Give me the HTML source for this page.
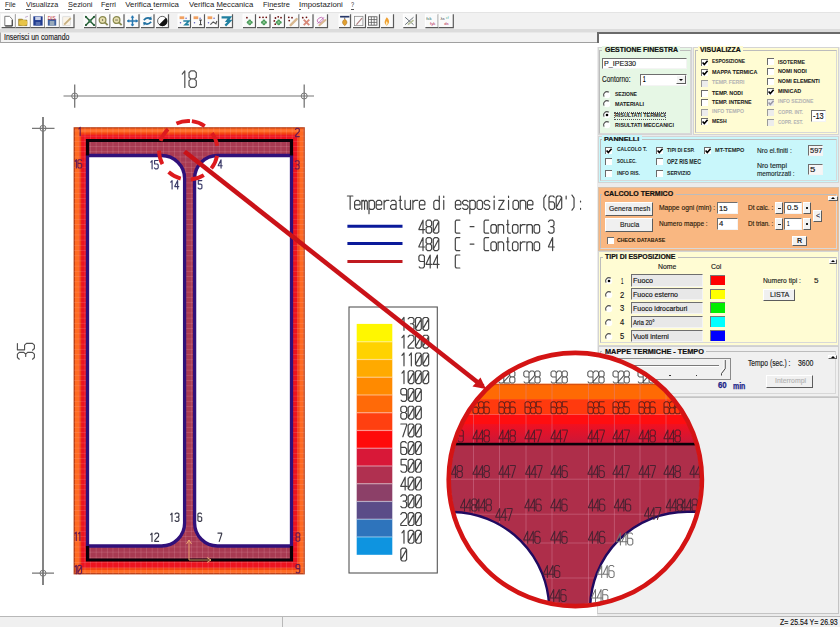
<!DOCTYPE html><html><head><meta charset="utf-8"><style>
*{box-sizing:border-box;margin:0;padding:0}
html,body{width:840px;height:627px;overflow:hidden;background:#fff;font-family:"Liberation Sans",sans-serif;}
.a{position:absolute}
.t{position:absolute;white-space:nowrap;line-height:1;-webkit-text-stroke:0.15px currentColor}
.menu{font-size:9px;color:#111}
.btn{position:absolute;background:#F4F4F4;border:1px solid #fff;border-right-color:#6a6a6a;border-bottom-color:#6a6a6a;box-shadow:1px 1px 0 #a0a0a0}
.inp{position:absolute;background:#fff;border:1px solid #f0f0f0;border-top-color:#777;border-left-color:#777;box-shadow:inset 1px 1px 0 #c8c8c8}
.grp{position:absolute;border:1px solid #c8c8c8;box-shadow:1px 1px 0 #fff inset}
.gt{position:absolute;font-weight:bold;font-size:7px;color:#111;padding:0 2px;line-height:1}
.cb{position:absolute;width:7px;height:7px;background:#fff;border:1px solid #fff;border-top-color:#777;border-left-color:#777}
.lb{position:absolute;font-size:5.2px;font-weight:bold;color:#222;white-space:nowrap;line-height:1;letter-spacing:-0.1px}
.dis{color:#b8b8b8}
.nl{position:absolute;font-size:8px;color:#111;white-space:nowrap;line-height:1}
</style></head><body>

<div class="a" style="left:0;top:0;width:840px;height:13px;background:#fff"></div>
<div class="t" style="left:5.40px;top:1.26px;font-size:7.85px;font-weight:normal;color:#222;transform:scaleX(0.839);transform-origin:0 0;-webkit-text-stroke:0">File</div>
<div class="t" style="left:25.70px;top:1.26px;font-size:7.85px;font-weight:normal;color:#222;transform:scaleX(0.914);transform-origin:0 0;-webkit-text-stroke:0">Visualizza</div>
<div class="t" style="left:67.50px;top:1.26px;font-size:7.85px;font-weight:normal;color:#222;transform:scaleX(0.952);transform-origin:0 0;-webkit-text-stroke:0">Sezioni</div>
<div class="t" style="left:100.70px;top:1.26px;font-size:7.85px;font-weight:normal;color:#222;transform:scaleX(0.930);transform-origin:0 0;-webkit-text-stroke:0">Ferri</div>
<div class="t" style="left:125.30px;top:1.26px;font-size:7.85px;font-weight:normal;color:#222;transform:scaleX(1.000);transform-origin:0 0;-webkit-text-stroke:0">Verifica termica</div>
<div class="t" style="left:188.60px;top:1.26px;font-size:7.85px;font-weight:normal;color:#222;transform:scaleX(0.982);transform-origin:0 0;-webkit-text-stroke:0">Verifica Meccanica</div>
<div class="t" style="left:262.50px;top:1.26px;font-size:7.85px;font-weight:normal;color:#222;transform:scaleX(0.946);transform-origin:0 0;-webkit-text-stroke:0">Finestre</div>
<div class="t" style="left:298.90px;top:1.26px;font-size:7.85px;font-weight:normal;color:#222;transform:scaleX(0.996);transform-origin:0 0;-webkit-text-stroke:0">Impostazioni</div>
<div class="t" style="left:351.40px;top:1.26px;font-size:7.85px;font-weight:normal;color:#222;transform:scaleX(0.712);transform-origin:0 0;-webkit-text-stroke:0">?</div>
<div class="a" style="left:5.2px;top:8.8px;width:4.8px;height:0.8px;background:#555"></div>
<div class="a" style="left:25.7px;top:8.8px;width:5.800000000000001px;height:0.8px;background:#555"></div>
<div class="a" style="left:67.5px;top:8.8px;width:4.5px;height:0.8px;background:#555"></div>
<div class="a" style="left:105px;top:8.8px;width:4px;height:0.8px;background:#555"></div>
<div class="a" style="left:150.3px;top:8.8px;width:3.0px;height:0.8px;background:#555"></div>
<div class="a" style="left:216.4px;top:8.8px;width:6.5px;height:0.8px;background:#555"></div>
<div class="a" style="left:268.9px;top:8.8px;width:5.100000000000023px;height:0.8px;background:#555"></div>
<div class="a" style="left:298.9px;top:8.8px;width:2.1000000000000227px;height:0.8px;background:#555"></div>
<div class="a" style="left:351.4px;top:8.8px;width:2.8000000000000114px;height:0.8px;background:#555"></div>
<div class="a" style="left:0;top:12px;width:840px;height:1px;background:#e4e4e4"></div>
<div class="a" style="left:0;top:13px;width:840px;height:16px;background:#f1f1f1"></div>
<div class="a" style="left:0;top:29px;width:840px;height:3px;background:#dcdcdc"></div>
<div class="a" style="left:0;top:32px;width:840px;height:11px;background:#f2f2f2;border-bottom:1px solid #a0a0a0;border-left:1px solid #a8a8a8;border-top:1px solid #e8e8e8"></div>
<div class="t" style="left:4.20px;top:32.86px;font-size:8.43px;font-weight:normal;color:#1a1a1a;transform:scaleX(0.821);transform-origin:0 0;">Inserisci un comando</div>
<div class="a" style="left:597px;top:32px;width:243px;height:11px;background:#fff;border-top:2px solid #6a6a6a;border-left:2px solid #6a6a6a"></div>
<div class="a" style="left:0;top:616px;width:840px;height:11px;background:#f0f0f0;border-top:1px solid #b8b8b8"></div>
<div class="a" style="left:282px;top:617px;width:1px;height:10px;background:#b8b8b8"></div>
<div class="t" style="left:779.50px;top:617.87px;font-size:9.01px;font-weight:normal;color:#111;transform:scaleX(0.776);transform-origin:0 0;">Z= 25.54 Y= 26.93</div>
<div class="a" style="left:597px;top:43px;width:243px;height:573px;background:#EBEBEB"></div>
<div class="a" style="left:597px;top:43px;width:243px;height:3.5px;background:#fff"></div>
<div class="a" style="left:597.5px;top:46.5px;width:94.5px;height:88.5px;background:#E6F7E5;border:1px solid #D4D4D4"></div>
<div class="a" style="left:692.5px;top:46.5px;width:146.0px;height:88.5px;background:#FFFCD3;border:1px solid #D4D4D4"></div>
<div class="a" style="left:597.5px;top:135.5px;width:241.0px;height:47.5px;background:#C9F7FB;border:1px solid #D4D4D4"></div>
<div class="a" style="left:597.5px;top:187px;width:241.0px;height:63.5px;background:#F9B781;border:1px solid #D8C0A8"></div>
<div class="a" style="left:597.5px;top:251px;width:241.0px;height:94.5px;background:#FFFCD3;border:1px solid #D4D4D4"></div>
<div class="a" style="left:597.5px;top:346px;width:241.0px;height:51px;background:#F0F0F0;border:1px solid #D0D0D0"></div>
<div class="a" style="left:597px;top:398px;width:241px;height:216px;background:#F0F0F0"></div>
<div class="a" style="left:599px;top:50.3px;width:91.5px;height:84.00000000000001px;border:1px solid #bcbcbc;border-right-color:#d8d8d8;border-bottom-color:#d8d8d8"></div>
<div class="a" style="left:694.5px;top:50.3px;width:142.79999999999995px;height:82.7px;border:1px solid #bcbcbc;border-right-color:#d8d8d8;border-bottom-color:#d8d8d8"></div>
<div class="a" style="left:600px;top:139.2px;width:236.70000000000005px;height:42.30000000000001px;border:1px solid #bcbcbc;border-right-color:#d8d8d8;border-bottom-color:#d8d8d8"></div>
<div class="a" style="left:600px;top:193.8px;width:237px;height:55.39999999999998px;border:1px solid #bcbcbc;border-right-color:#d8d8d8;border-bottom-color:#d8d8d8"></div>
<div class="a" style="left:600px;top:256.7px;width:237px;height:86.80000000000001px;border:1px solid #bcbcbc;border-right-color:#d8d8d8;border-bottom-color:#d8d8d8"></div>
<div class="a" style="left:600px;top:351.1px;width:236px;height:43.299999999999955px;border:1px solid #bcbcbc;border-right-color:#d8d8d8;border-bottom-color:#d8d8d8"></div>
<div class="a" style="left:597px;top:396.8px;width:241.5px;height:217px;border:1px solid #c4c4c4;border-left-color:#d0d0d0"></div>
<div class="a" style="left:602.0px;top:46px;width:78.20000000000005px;height:8.5px;background:#E6F7E5"></div>
<div class="t" style="left:604.50px;top:46.96px;font-size:6.54px;font-weight:bold;color:#101010;transform:scaleX(1.071);transform-origin:0 0;-webkit-text-stroke:0.2px currentColor;">GESTIONE FINESTRA</div>
<div class="a" style="left:697.7px;top:46.3px;width:45.799999999999955px;height:8.450000000000003px;background:#FFFCD3"></div>
<div class="t" style="left:700.20px;top:47.27px;font-size:6.47px;font-weight:bold;color:#101010;transform:scaleX(1.071);transform-origin:0 0;-webkit-text-stroke:0.2px currentColor;">VISUALIZZA</div>
<div class="a" style="left:601.7px;top:135.3px;width:40.19999999999993px;height:8.299999999999983px;background:#C9F7FB"></div>
<div class="t" style="left:604.20px;top:136.31px;font-size:6.25px;font-weight:bold;color:#101010;transform:scaleX(1.144);transform-origin:0 0;-webkit-text-stroke:0.2px currentColor;">PANNELLI</div>
<div class="a" style="left:601.9px;top:189.9px;width:74.20000000000005px;height:8.599999999999994px;background:#F9B781"></div>
<div class="t" style="left:604.40px;top:190.84px;font-size:6.69px;font-weight:bold;color:#101010;transform:scaleX(1.052);transform-origin:0 0;-webkit-text-stroke:0.2px currentColor;">CALCOLO TERMICO</div>
<div class="a" style="left:602.6px;top:252.8px;width:75.5px;height:8.699999999999989px;background:#FFFCD3"></div>
<div class="t" style="left:605.10px;top:253.72px;font-size:6.83px;font-weight:bold;color:#101010;transform:scaleX(1.015);transform-origin:0 0;-webkit-text-stroke:0.2px currentColor;">TIPI DI ESPOSIZIONE</div>
<div class="a" style="left:602.2px;top:347.6px;width:104.0px;height:8.799999999999955px;background:#F0F0F0"></div>
<div class="t" style="left:604.70px;top:348.49px;font-size:6.98px;font-weight:bold;color:#101010;transform:scaleX(1.051);transform-origin:0 0;-webkit-text-stroke:0.2px currentColor;">MAPPE TERMICHE - TEMPO</div>
<div class="a" style="left:602.1px;top:57.5px;width:84.60000000000002px;height:11.299999999999997px;background:#fff;border-top:1.5px solid #6e6e6e;border-left:1.5px solid #6e6e6e;border-right:1px solid #f4f4f4;border-bottom:1px solid #f4f4f4"></div>
<div class="t" style="left:603.90px;top:59.76px;font-size:7.85px;font-weight:normal;color:#1a1a1a;transform:scaleX(0.908);transform-origin:0 0;">P_IPE330</div>
<div class="t" style="left:602.10px;top:76.39px;font-size:8.28px;font-weight:normal;color:#1a1a1a;transform:scaleX(0.786);transform-origin:0 0;">Contorno:</div>
<div class="a" style="left:640.2px;top:73.5px;width:46.5px;height:12.0px;background:#fff;border-top:1.5px solid #6e6e6e;border-left:1.5px solid #6e6e6e;border-right:1px solid #f4f4f4;border-bottom:1px solid #f4f4f4"></div>
<div class="t" style="left:642.90px;top:75.79px;font-size:8.28px;font-weight:bold;color:#111;transform:scaleX(0.544);transform-origin:0 0;-webkit-text-stroke:0.05px currentColor;">1</div>
<div class="a" style="left:676px;top:74.8px;width:10px;height:9.700000000000003px;background:#F4F4F4;border-top:1px solid #fff;border-left:1px solid #fff;border-right:1.6px solid #5c5c5c;border-bottom:1.6px solid #5c5c5c"></div>
<div class="a" style="left:678.7px;top:78.8px;width:0;height:0;border-left:2.6px solid transparent;border-right:2.6px solid transparent;border-top:2.8px solid #000"></div>
<svg class="a" style="left:603.1px;top:91px" width="8" height="8" viewBox="0 0 8 8"><circle cx="4" cy="4" r="3.3" fill="#fff"/><path d="M1.2 5.6 A3.2 3.2 0 0 1 5.8 1.3" stroke="#555" stroke-width="1.1" fill="none"/></svg>
<div class="t" style="left:614.60px;top:92.48px;font-size:5.81px;font-weight:bold;color:#222;transform:scaleX(0.862);transform-origin:0 0;-webkit-text-stroke:0.05px currentColor;">SEZIONE</div>
<svg class="a" style="left:603.1px;top:100.1px" width="8" height="8" viewBox="0 0 8 8"><circle cx="4" cy="4" r="3.3" fill="#fff"/><path d="M1.2 5.6 A3.2 3.2 0 0 1 5.8 1.3" stroke="#555" stroke-width="1.1" fill="none"/></svg>
<div class="t" style="left:614.60px;top:102.06px;font-size:5.96px;font-weight:bold;color:#222;transform:scaleX(0.906);transform-origin:0 0;-webkit-text-stroke:0.05px currentColor;">MATERIALI</div>
<svg class="a" style="left:603.1px;top:111.3px" width="8" height="8" viewBox="0 0 8 8"><circle cx="4" cy="4" r="3.3" fill="#fff"/><path d="M1.2 5.6 A3.2 3.2 0 0 1 5.8 1.3" stroke="#555" stroke-width="1.1" fill="none"/><circle cx="4" cy="4" r="1.3" fill="#000"/></svg>
<div class="t" style="left:614.60px;top:112.76px;font-size:5.96px;font-weight:bold;color:#222;transform:scaleX(0.901);transform-origin:0 0;-webkit-text-stroke:0.05px currentColor;">RISULTATI TERMICI</div>
<svg class="a" style="left:603.1px;top:121px" width="8" height="8" viewBox="0 0 8 8"><circle cx="4" cy="4" r="3.3" fill="#fff"/><path d="M1.2 5.6 A3.2 3.2 0 0 1 5.8 1.3" stroke="#555" stroke-width="1.1" fill="none"/></svg>
<div class="t" style="left:614.60px;top:122.41px;font-size:6.25px;font-weight:bold;color:#222;transform:scaleX(0.862);transform-origin:0 0;-webkit-text-stroke:0.05px currentColor;">RISULTATI MECCANICI</div>
<div class="a" style="left:613.9px;top:111.6px;width:51.8px;height:8px;border:1px dotted #555"></div>
<div class="a" style="left:700.5px;top:58.7px;width:7px;height:7px;background:#fff;border-top:1.5px solid #6a6a6a;border-left:1.5px solid #6a6a6a"></div>
<svg class="a" style="left:700.5px;top:58.7px" width="8" height="8" viewBox="0 0 8 8"><path d="M1.6 3.6 L3.3 5.6 L6.6 1.8" fill="none" stroke="#000" stroke-width="1.6"/></svg>
<div class="t" style="left:712.00px;top:59.29px;font-size:5.09px;font-weight:bold;color:#1a1a1a;transform:scaleX(0.957);transform-origin:0 0;-webkit-text-stroke:0.05px currentColor;">ESPOSIZIONE</div>
<div class="a" style="left:700.5px;top:69.4px;width:7px;height:7px;background:#fff;border-top:1.5px solid #6a6a6a;border-left:1.5px solid #6a6a6a"></div>
<svg class="a" style="left:700.5px;top:69.4px" width="8" height="8" viewBox="0 0 8 8"><path d="M1.6 3.6 L3.3 5.6 L6.6 1.8" fill="none" stroke="#000" stroke-width="1.6"/></svg>
<div class="t" style="left:712.00px;top:69.88px;font-size:5.81px;font-weight:bold;color:#1a1a1a;transform:scaleX(0.939);transform-origin:0 0;-webkit-text-stroke:0.05px currentColor;">MAPPA TERMICA</div>
<div class="a" style="left:700.5px;top:80.2px;width:7px;height:7px;background:#ECECEC;border-top:1.5px solid #9a9a9a;border-left:1.5px solid #9a9a9a"></div>
<div class="t" style="left:712.00px;top:80.06px;font-size:5.96px;font-weight:bold;color:#b4b4b4;transform:scaleX(0.882);transform-origin:0 0;-webkit-text-stroke:0.05px currentColor;">TEMP. FERRI</div>
<div class="a" style="left:700.5px;top:89.8px;width:7px;height:7px;background:#fff;border-top:1.5px solid #6a6a6a;border-left:1.5px solid #6a6a6a"></div>
<div class="t" style="left:712.00px;top:90.77px;font-size:5.23px;font-weight:bold;color:#1a1a1a;transform:scaleX(1.032);transform-origin:0 0;-webkit-text-stroke:0.05px currentColor;">TEMP. NODI</div>
<div class="a" style="left:700.5px;top:99.2px;width:7px;height:7px;background:#fff;border-top:1.5px solid #6a6a6a;border-left:1.5px solid #6a6a6a"></div>
<div class="t" style="left:712.00px;top:100.08px;font-size:5.81px;font-weight:bold;color:#1a1a1a;transform:scaleX(0.899);transform-origin:0 0;-webkit-text-stroke:0.05px currentColor;">TEMP. INTERNE</div>
<div class="a" style="left:700.5px;top:109px;width:7px;height:7px;background:#ECECEC;border-top:1.5px solid #9a9a9a;border-left:1.5px solid #9a9a9a"></div>
<div class="t" style="left:712.00px;top:109.47px;font-size:5.23px;font-weight:bold;color:#b4b4b4;transform:scaleX(0.986);transform-origin:0 0;-webkit-text-stroke:0.05px currentColor;">INFO TEMPO</div>
<div class="a" style="left:700.5px;top:118.4px;width:7px;height:7px;background:#fff;border-top:1.5px solid #6a6a6a;border-left:1.5px solid #6a6a6a"></div>
<svg class="a" style="left:700.5px;top:118.4px" width="8" height="8" viewBox="0 0 8 8"><path d="M1.6 3.6 L3.3 5.6 L6.6 1.8" fill="none" stroke="#000" stroke-width="1.6"/></svg>
<div class="t" style="left:712.00px;top:118.78px;font-size:5.81px;font-weight:bold;color:#1a1a1a;transform:scaleX(0.875);transform-origin:0 0;-webkit-text-stroke:0.05px currentColor;">MESH</div>
<div class="a" style="left:767.1px;top:58.4px;width:7px;height:7px;background:#fff;border-top:1.5px solid #6a6a6a;border-left:1.5px solid #6a6a6a"></div>
<div class="t" style="left:778.20px;top:58.73px;font-size:6.10px;font-weight:bold;color:#1a1a1a;transform:scaleX(0.846);transform-origin:0 0;-webkit-text-stroke:0.05px currentColor;">ISOTERME</div>
<div class="a" style="left:767.1px;top:68.1px;width:7px;height:7px;background:#fff;border-top:1.5px solid #6a6a6a;border-left:1.5px solid #6a6a6a"></div>
<div class="t" style="left:778.20px;top:69.15px;font-size:5.38px;font-weight:bold;color:#1a1a1a;transform:scaleX(0.994);transform-origin:0 0;-webkit-text-stroke:0.05px currentColor;">NOMI NODI</div>
<div class="a" style="left:767.1px;top:78.3px;width:7px;height:7px;background:#fff;border-top:1.5px solid #6a6a6a;border-left:1.5px solid #6a6a6a"></div>
<div class="t" style="left:778.20px;top:79.35px;font-size:5.38px;font-weight:bold;color:#1a1a1a;transform:scaleX(0.978);transform-origin:0 0;-webkit-text-stroke:0.05px currentColor;">NOMI ELEMENTI</div>
<div class="a" style="left:767.1px;top:88.1px;width:7px;height:7px;background:#fff;border-top:1.5px solid #6a6a6a;border-left:1.5px solid #6a6a6a"></div>
<svg class="a" style="left:767.1px;top:88.1px" width="8" height="8" viewBox="0 0 8 8"><path d="M1.6 3.6 L3.3 5.6 L6.6 1.8" fill="none" stroke="#000" stroke-width="1.6"/></svg>
<div class="t" style="left:778.20px;top:89.17px;font-size:5.23px;font-weight:bold;color:#1a1a1a;transform:scaleX(1.042);transform-origin:0 0;-webkit-text-stroke:0.05px currentColor;">MINICAD</div>
<div class="a" style="left:767.1px;top:98.5px;width:7px;height:7px;background:#ECECEC;border-top:1.5px solid #9a9a9a;border-left:1.5px solid #9a9a9a"></div>
<svg class="a" style="left:767.1px;top:98.5px" width="8" height="8" viewBox="0 0 8 8"><path d="M1.6 3.6 L3.3 5.6 L6.6 1.8" fill="none" stroke="#9a9aa8" stroke-width="1.6"/></svg>
<div class="t" style="left:778.20px;top:99.05px;font-size:5.38px;font-weight:bold;color:#b4b4b4;transform:scaleX(0.930);transform-origin:0 0;-webkit-text-stroke:0.05px currentColor;">INFO SEZIONE</div>
<div class="a" style="left:767.1px;top:108.7px;width:7px;height:7px;background:#ECECEC;border-top:1.5px solid #9a9a9a;border-left:1.5px solid #9a9a9a"></div>
<div class="t" style="left:778.20px;top:109.75px;font-size:5.38px;font-weight:bold;color:#b4b4b4;transform:scaleX(0.893);transform-origin:0 0;-webkit-text-stroke:0.05px currentColor;">COPR. INT.</div>
<div class="a" style="left:767.1px;top:118.9px;width:7px;height:7px;background:#ECECEC;border-top:1.5px solid #9a9a9a;border-left:1.5px solid #9a9a9a"></div>
<div class="t" style="left:778.20px;top:119.95px;font-size:5.38px;font-weight:bold;color:#b4b4b4;transform:scaleX(0.840);transform-origin:0 0;-webkit-text-stroke:0.05px currentColor;">COPR. EST.</div>
<div class="a" style="left:810.7px;top:110.1px;width:15.299999999999955px;height:12.100000000000009px;background:#fff;border-top:1.5px solid #6e6e6e;border-left:1.5px solid #6e6e6e;border-right:1px solid #f4f4f4;border-bottom:1px solid #f4f4f4"></div>
<div class="t" style="left:812.60px;top:111.52px;font-size:8.72px;font-weight:normal;color:#111;transform:scaleX(0.849);transform-origin:0 0;">-13</div>
<div class="a" style="left:605.4px;top:146.9px;width:7px;height:7px;background:#fff;border-top:1.5px solid #6a6a6a;border-left:1.5px solid #6a6a6a"></div>
<svg class="a" style="left:605.4px;top:146.9px" width="8" height="8" viewBox="0 0 8 8"><path d="M1.6 3.6 L3.3 5.6 L6.6 1.8" fill="none" stroke="#000" stroke-width="1.6"/></svg>
<div class="t" style="left:617.00px;top:147.38px;font-size:5.81px;font-weight:bold;color:#1e2a2a;transform:scaleX(0.860);transform-origin:0 0;-webkit-text-stroke:0.05px currentColor;">CALCOLO T.</div>
<div class="a" style="left:605.4px;top:158.3px;width:7px;height:7px;background:#fff;border-top:1.5px solid #6a6a6a;border-left:1.5px solid #6a6a6a"></div>
<div class="t" style="left:617.00px;top:159.26px;font-size:5.96px;font-weight:bold;color:#1e2a2a;transform:scaleX(0.759);transform-origin:0 0;-webkit-text-stroke:0.05px currentColor;">SOLLEC.</div>
<div class="a" style="left:605.4px;top:170.2px;width:7px;height:7px;background:#fff;border-top:1.5px solid #6a6a6a;border-left:1.5px solid #6a6a6a"></div>
<div class="t" style="left:617.00px;top:171.22px;font-size:5.52px;font-weight:bold;color:#1e2a2a;transform:scaleX(0.899);transform-origin:0 0;-webkit-text-stroke:0.05px currentColor;">INFO RIS.</div>
<div class="a" style="left:655.9px;top:146.9px;width:7px;height:7px;background:#fff;border-top:1.5px solid #6a6a6a;border-left:1.5px solid #6a6a6a"></div>
<svg class="a" style="left:655.9px;top:146.9px" width="8" height="8" viewBox="0 0 8 8"><path d="M1.6 3.6 L3.3 5.6 L6.6 1.8" fill="none" stroke="#000" stroke-width="1.6"/></svg>
<div class="t" style="left:667.00px;top:147.11px;font-size:6.25px;font-weight:bold;color:#1e2a2a;transform:scaleX(0.794);transform-origin:0 0;-webkit-text-stroke:0.05px currentColor;">TIPI DI ESP.</div>
<div class="a" style="left:655.9px;top:158.3px;width:7px;height:7px;background:#fff;border-top:1.5px solid #6a6a6a;border-left:1.5px solid #6a6a6a"></div>
<div class="t" style="left:667.00px;top:158.54px;font-size:6.69px;font-weight:bold;color:#1e2a2a;transform:scaleX(0.782);transform-origin:0 0;-webkit-text-stroke:0.05px currentColor;">OPZ RIS MEC</div>
<div class="a" style="left:655.9px;top:170.2px;width:7px;height:7px;background:#fff;border-top:1.5px solid #6a6a6a;border-left:1.5px solid #6a6a6a"></div>
<div class="t" style="left:667.00px;top:170.86px;font-size:5.96px;font-weight:bold;color:#1e2a2a;transform:scaleX(0.859);transform-origin:0 0;-webkit-text-stroke:0.05px currentColor;">SERVIZIO</div>
<div class="a" style="left:703.9px;top:146.9px;width:7px;height:7px;background:#fff;border-top:1.5px solid #6a6a6a;border-left:1.5px solid #6a6a6a"></div>
<svg class="a" style="left:703.9px;top:146.9px" width="8" height="8" viewBox="0 0 8 8"><path d="M1.6 3.6 L3.3 5.6 L6.6 1.8" fill="none" stroke="#000" stroke-width="1.6"/></svg>
<div class="t" style="left:714.80px;top:147.11px;font-size:6.25px;font-weight:bold;color:#1e2a2a;transform:scaleX(0.891);transform-origin:0 0;-webkit-text-stroke:0.05px currentColor;">MT-TEMPO</div>
<div class="t" style="left:757.10px;top:146.90px;font-size:7.56px;font-weight:normal;color:#1a2a2a;transform:scaleX(0.872);transform-origin:0 0;">Nro el.finiti :</div>
<div class="t" style="left:757.10px;top:162.19px;font-size:6.98px;font-weight:normal;color:#1a2a2a;transform:scaleX(0.992);transform-origin:0 0;">Nro tempi</div>
<div class="t" style="left:757.10px;top:170.18px;font-size:7.70px;font-weight:normal;color:#1a2a2a;transform:scaleX(0.823);transform-origin:0 0;">memorizzati :</div>
<div class="a" style="left:808.1px;top:145.2px;width:15.199999999999932px;height:10.5px;background:#F6F6F6;border-top:1.5px solid #6e6e6e;border-left:1.5px solid #6e6e6e;border-right:1px solid #f4f4f4;border-bottom:1px solid #f4f4f4"></div>
<div class="t" style="left:809.50px;top:147.52px;font-size:6.83px;font-weight:normal;color:#222;transform:scaleX(1.087);transform-origin:0 0;">597</div>
<div class="a" style="left:808.1px;top:163.8px;width:15.199999999999932px;height:11.0px;background:#F6F6F6;border-top:1.5px solid #6e6e6e;border-left:1.5px solid #6e6e6e;border-right:1px solid #f4f4f4;border-bottom:1px solid #f4f4f4"></div>
<div class="t" style="left:809.50px;top:165.88px;font-size:7.70px;font-weight:normal;color:#222;transform:scaleX(1.240);transform-origin:0 0;">5</div>
<div class="a" style="left:605px;top:202.1px;width:48.200000000000045px;height:14.400000000000006px;background:#F0F0F0;border-top:1px solid #fff;border-left:1px solid #fff;border-right:1.6px solid #5c5c5c;border-bottom:1.6px solid #5c5c5c"></div>
<div class="t" style="left:608.70px;top:205.18px;font-size:7.70px;font-weight:normal;color:#1a1a1a;transform:scaleX(0.885);transform-origin:0 0;">Genera mesh</div>
<div class="a" style="left:605px;top:217.6px;width:48.200000000000045px;height:14.5px;background:#F0F0F0;border-top:1px solid #fff;border-left:1px solid #fff;border-right:1.6px solid #5c5c5c;border-bottom:1.6px solid #5c5c5c"></div>
<div class="t" style="left:620.00px;top:220.66px;font-size:7.85px;font-weight:normal;color:#1a1a1a;transform:scaleX(0.866);transform-origin:0 0;">Brucia</div>
<div class="a" style="left:606.6px;top:237.4px;width:7px;height:7px;background:#fff;border-top:1.5px solid #6a6a6a;border-left:1.5px solid #6a6a6a"></div>
<div class="t" style="left:617.30px;top:238.12px;font-size:5.52px;font-weight:bold;color:#2a1a0a;transform:scaleX(0.944);transform-origin:0 0;-webkit-text-stroke:0.05px currentColor;">CHECK DATABASE</div>
<div class="t" style="left:658.80px;top:204.26px;font-size:7.85px;font-weight:normal;color:#2a1a0a;transform:scaleX(0.859);transform-origin:0 0;">Mappe ogni (min) :</div>
<div class="t" style="left:658.80px;top:219.76px;font-size:7.85px;font-weight:normal;color:#2a1a0a;transform:scaleX(0.833);transform-origin:0 0;">Numero mappe :</div>
<div class="a" style="left:717.2px;top:202.3px;width:20.799999999999955px;height:11.699999999999989px;background:#fff;border-top:1.5px solid #6e6e6e;border-left:1.5px solid #6e6e6e;border-right:1px solid #f4f4f4;border-bottom:1px solid #f4f4f4"></div>
<div class="t" style="left:719.30px;top:204.76px;font-size:7.85px;font-weight:normal;color:#111;transform:scaleX(0.987);transform-origin:0 0;">15</div>
<div class="a" style="left:717.2px;top:218.4px;width:20.799999999999955px;height:11.799999999999983px;background:#fff;border-top:1.5px solid #6e6e6e;border-left:1.5px solid #6e6e6e;border-right:1px solid #f4f4f4;border-bottom:1px solid #f4f4f4"></div>
<div class="t" style="left:719.30px;top:220.38px;font-size:7.70px;font-weight:normal;color:#111;transform:scaleX(1.006);transform-origin:0 0;">4</div>
<div class="t" style="left:747.50px;top:204.43px;font-size:7.41px;font-weight:normal;color:#2a1a0a;transform:scaleX(0.877);transform-origin:0 0;">Dt calc. :</div>
<div class="t" style="left:747.50px;top:220.15px;font-size:7.27px;font-weight:normal;color:#2a1a0a;transform:scaleX(0.859);transform-origin:0 0;">Dt trian. :</div>
<div class="a" style="left:774.9px;top:202px;width:8.100000000000023px;height:11.699999999999989px;background:#F2F2F2;border-top:1px solid #fff;border-left:1px solid #fff;border-right:1.6px solid #5c5c5c;border-bottom:1.6px solid #5c5c5c"></div>
<div class="a" style="left:777.5px;top:208px;width:3px;height:1px;background:#222"></div>
<div class="a" style="left:783.5px;top:202px;width:18.700000000000045px;height:11.699999999999989px;background:#fff;border-top:1.5px solid #6e6e6e;border-left:1.5px solid #6e6e6e;border-right:1px solid #f4f4f4;border-bottom:1px solid #f4f4f4"></div>
<div class="t" style="left:786.50px;top:204.43px;font-size:7.41px;font-weight:normal;color:#111;transform:scaleX(1.077);transform-origin:0 0;">0.5</div>
<div class="a" style="left:802.7px;top:202px;width:8.099999999999909px;height:11.699999999999989px;background:#F2F2F2;border-top:1px solid #fff;border-left:1px solid #fff;border-right:1.6px solid #5c5c5c;border-bottom:1.6px solid #5c5c5c"></div>
<div class="a" style="left:805.8px;top:206.85px;width:2px;height:2px;background:#222"></div>
<div class="a" style="left:774.9px;top:218.2px;width:8.100000000000023px;height:11.700000000000017px;background:#F2F2F2;border-top:1px solid #fff;border-left:1px solid #fff;border-right:1.6px solid #5c5c5c;border-bottom:1.6px solid #5c5c5c"></div>
<div class="a" style="left:777.5px;top:224px;width:3px;height:1px;background:#222"></div>
<div class="a" style="left:783.5px;top:218.2px;width:18.700000000000045px;height:11.700000000000017px;background:#fff;border-top:1.5px solid #6e6e6e;border-left:1.5px solid #6e6e6e;border-right:1px solid #f4f4f4;border-bottom:1px solid #f4f4f4"></div>
<div class="t" style="left:786.50px;top:220.15px;font-size:7.27px;font-weight:normal;color:#111;transform:scaleX(0.620);transform-origin:0 0;">1</div>
<div class="a" style="left:802.7px;top:218.2px;width:8.099999999999909px;height:11.700000000000017px;background:#F2F2F2;border-top:1px solid #fff;border-left:1px solid #fff;border-right:1.6px solid #5c5c5c;border-bottom:1.6px solid #5c5c5c"></div>
<div class="a" style="left:805.8px;top:223.05px;width:2px;height:2px;background:#222"></div>
<div class="a" style="left:812.8px;top:209.6px;width:9.600000000000023px;height:12.200000000000017px;background:#F2F2F2;border-top:1px solid #fff;border-left:1px solid #fff;border-right:1.6px solid #5c5c5c;border-bottom:1.6px solid #5c5c5c"></div>
<div class="t" style="left:815.50px;top:212.15px;font-size:7.27px;font-weight:normal;color:#223;transform:scaleX(0.941);transform-origin:0 0;">&lt;</div>
<div class="a" style="left:792px;top:236px;width:14.700000000000045px;height:9.599999999999994px;background:#F2F2F2;border-top:1px solid #fff;border-left:1px solid #fff;border-right:1.6px solid #5c5c5c;border-bottom:1.6px solid #5c5c5c"></div>
<div class="t" style="left:797.10px;top:237.35px;font-size:7.27px;font-weight:bold;color:#222;transform:scaleX(0.975);transform-origin:0 0;-webkit-text-stroke:0.05px currentColor;">R</div>
<div class="a" style="left:828px;top:195.6px;width:9.5px;height:5.200000000000017px;background:#F2F2F2;border-top:1px solid #fff;border-left:1px solid #fff;border-right:1.6px solid #5c5c5c;border-bottom:1.6px solid #5c5c5c"></div>
<div class="a" style="left:831px;top:196.8px;width:0;height:0;border-left:2px solid transparent;border-right:2px solid transparent;border-bottom:2px solid #000"></div>
<div class="t" style="left:658.00px;top:263.10px;font-size:7.56px;font-weight:normal;color:#1a1a1a;transform:scaleX(0.907);transform-origin:0 0;">Nome</div>
<div class="t" style="left:711.40px;top:263.10px;font-size:7.56px;font-weight:normal;color:#1a1a1a;transform:scaleX(0.917);transform-origin:0 0;">Col</div>
<svg class="a" style="left:604.5px;top:277.4px" width="8" height="8" viewBox="0 0 8 8"><circle cx="4" cy="4" r="3.3" fill="#fff"/><path d="M1.2 5.6 A3.2 3.2 0 0 1 5.8 1.3" stroke="#555" stroke-width="1.1" fill="none"/><circle cx="4" cy="4" r="1.3" fill="#000"/></svg>
<div class="t" style="left:621.20px;top:276.89px;font-size:8.87px;font-weight:normal;color:#111;transform:scaleX(0.488);transform-origin:0 0;">1</div>
<div class="a" style="left:630.9px;top:274.3px;width:72.10000000000002px;height:12.400000000000034px;background:#E8E8E8;border-top:1.5px solid #6e6e6e;border-left:1.5px solid #6e6e6e;border-right:1px solid #f4f4f4;border-bottom:1px solid #f4f4f4"></div>
<div class="t" style="left:632.80px;top:277.40px;font-size:7.56px;font-weight:normal;color:#111;transform:scaleX(0.952);transform-origin:0 0;">Fuoco</div>
<div class="a" style="left:710px;top:274.8px;width:14.8px;height:10.6px;background:#FF0000;border-top:1px solid #777;border-left:1px solid #777"></div>
<svg class="a" style="left:604.5px;top:291.2px" width="8" height="8" viewBox="0 0 8 8"><circle cx="4" cy="4" r="3.3" fill="#fff"/><path d="M1.2 5.6 A3.2 3.2 0 0 1 5.8 1.3" stroke="#555" stroke-width="1.1" fill="none"/></svg>
<div class="t" style="left:620.30px;top:290.69px;font-size:8.87px;font-weight:normal;color:#111;transform:scaleX(0.854);transform-origin:0 0;">2</div>
<div class="a" style="left:630.9px;top:288.1px;width:72.10000000000002px;height:12.400000000000034px;background:#E8E8E8;border-top:1.5px solid #6e6e6e;border-left:1.5px solid #6e6e6e;border-right:1px solid #f4f4f4;border-bottom:1px solid #f4f4f4"></div>
<div class="t" style="left:632.80px;top:291.20px;font-size:7.56px;font-weight:normal;color:#111;transform:scaleX(0.933);transform-origin:0 0;">Fuoco esterno</div>
<div class="a" style="left:710px;top:288.6px;width:14.8px;height:10.6px;background:#FFFF00;border-top:1px solid #777;border-left:1px solid #777"></div>
<svg class="a" style="left:604.5px;top:305.0px" width="8" height="8" viewBox="0 0 8 8"><circle cx="4" cy="4" r="3.3" fill="#fff"/><path d="M1.2 5.6 A3.2 3.2 0 0 1 5.8 1.3" stroke="#555" stroke-width="1.1" fill="none"/></svg>
<div class="t" style="left:620.30px;top:304.49px;font-size:8.87px;font-weight:normal;color:#111;transform:scaleX(0.854);transform-origin:0 0;">3</div>
<div class="a" style="left:630.9px;top:301.90000000000003px;width:72.10000000000002px;height:12.400000000000034px;background:#E8E8E8;border-top:1.5px solid #6e6e6e;border-left:1.5px solid #6e6e6e;border-right:1px solid #f4f4f4;border-bottom:1px solid #f4f4f4"></div>
<div class="t" style="left:632.80px;top:305.00px;font-size:7.56px;font-weight:normal;color:#111;transform:scaleX(0.925);transform-origin:0 0;">Fuoco idrocarburi</div>
<div class="a" style="left:710px;top:302.40000000000003px;width:14.8px;height:10.6px;background:#00EE00;border-top:1px solid #777;border-left:1px solid #777"></div>
<svg class="a" style="left:604.5px;top:318.79999999999995px" width="8" height="8" viewBox="0 0 8 8"><circle cx="4" cy="4" r="3.3" fill="#fff"/><path d="M1.2 5.6 A3.2 3.2 0 0 1 5.8 1.3" stroke="#555" stroke-width="1.1" fill="none"/></svg>
<div class="t" style="left:620.30px;top:318.29px;font-size:8.87px;font-weight:normal;color:#111;transform:scaleX(0.854);transform-origin:0 0;">4</div>
<div class="a" style="left:630.9px;top:315.7px;width:72.10000000000002px;height:12.400000000000034px;background:#E8E8E8;border-top:1.5px solid #6e6e6e;border-left:1.5px solid #6e6e6e;border-right:1px solid #f4f4f4;border-bottom:1px solid #f4f4f4"></div>
<div class="t" style="left:632.80px;top:318.80px;font-size:7.56px;font-weight:normal;color:#111;transform:scaleX(0.804);transform-origin:0 0;">Aria 20&deg;</div>
<div class="a" style="left:710px;top:316.2px;width:14.8px;height:10.6px;background:#00FFFF;border-top:1px solid #777;border-left:1px solid #777"></div>
<svg class="a" style="left:604.5px;top:332.59999999999997px" width="8" height="8" viewBox="0 0 8 8"><circle cx="4" cy="4" r="3.3" fill="#fff"/><path d="M1.2 5.6 A3.2 3.2 0 0 1 5.8 1.3" stroke="#555" stroke-width="1.1" fill="none"/></svg>
<div class="t" style="left:620.30px;top:332.09px;font-size:8.87px;font-weight:normal;color:#111;transform:scaleX(0.854);transform-origin:0 0;">5</div>
<div class="a" style="left:630.9px;top:329.5px;width:72.10000000000002px;height:12.400000000000034px;background:#E8E8E8;border-top:1.5px solid #6e6e6e;border-left:1.5px solid #6e6e6e;border-right:1px solid #f4f4f4;border-bottom:1px solid #f4f4f4"></div>
<div class="t" style="left:632.80px;top:332.60px;font-size:7.56px;font-weight:normal;color:#111;transform:scaleX(0.906);transform-origin:0 0;">Vuoti interni</div>
<div class="a" style="left:710px;top:330.0px;width:14.8px;height:10.6px;background:#0000FF;border-top:1px solid #777;border-left:1px solid #777"></div>
<div class="t" style="left:763.30px;top:277.30px;font-size:7.56px;font-weight:normal;color:#1a1a1a;transform:scaleX(0.887);transform-origin:0 0;">Numero tipi :</div>
<div class="t" style="left:813.60px;top:277.30px;font-size:7.56px;font-weight:normal;color:#1a1a1a;transform:scaleX(1.073);transform-origin:0 0;">5</div>
<div class="a" style="left:763.3px;top:288.9px;width:32.200000000000045px;height:12.200000000000045px;background:#F0F0F0;border-top:1px solid #fff;border-left:1px solid #fff;border-right:1.6px solid #5c5c5c;border-bottom:1.6px solid #5c5c5c"></div>
<div class="t" style="left:769.50px;top:291.40px;font-size:7.56px;font-weight:normal;color:#1a1a1a;transform:scaleX(0.942);transform-origin:0 0;">LISTA</div>
<div class="a" style="left:828.6px;top:259.2px;width:8.899999999999977px;height:5.100000000000023px;background:#F2F2F2;border-top:1px solid #fff;border-left:1px solid #fff;border-right:1.6px solid #5c5c5c;border-bottom:1.6px solid #5c5c5c"></div>
<div class="a" style="left:831px;top:260.3px;width:0;height:0;border-left:2px solid transparent;border-right:2px solid transparent;border-bottom:2px solid #000"></div>
<div class="a" style="left:598px;top:357.6px;width:133.3px;height:22.5px;border:1px solid #8a8a8a;border-right-color:#8a8a8a;border-bottom-color:#8a8a8a"></div>
<div class="a" style="left:600px;top:364.5px;width:119px;height:2px;border-top:1px solid #7a7a7a;border-bottom:1px solid #fff"></div>
<svg class="a" style="left:715px;top:356px" width="16" height="24" viewBox="715 356 16 24"><path d="M725.2 360 V368.7 L721.5 373.5 V375.5" stroke="#444" stroke-width="1" fill="none"/><path d="M724 360 V368 L720.5 372.5" stroke="#fff" stroke-width="0.8" fill="none"/></svg>
<div class="a" style="left:669.4px;top:374.6px;width:1.2px;height:1.4px;background:#333"></div>
<div class="a" style="left:696.1px;top:374.6px;width:1.2px;height:1.4px;background:#333"></div>
<div class="t" style="left:718.40px;top:381.69px;font-size:8.28px;font-weight:bold;color:#1a2488;transform:scaleX(0.946);transform-origin:0 0;-webkit-text-stroke:0.25px currentColor;">60</div>
<div class="t" style="left:733.20px;top:381.56px;font-size:8.43px;font-weight:bold;color:#1a2488;transform:scaleX(0.826);transform-origin:0 0;-webkit-text-stroke:0.25px currentColor;">min</div>
<div class="t" style="left:748.30px;top:359.14px;font-size:8.58px;font-weight:normal;color:#1a1a1a;transform:scaleX(0.779);transform-origin:0 0;">Tempo (sec.) :</div>
<div class="t" style="left:797.70px;top:359.14px;font-size:8.58px;font-weight:normal;color:#1a1a1a;transform:scaleX(0.812);transform-origin:0 0;">3600</div>
<div class="a" style="left:766.2px;top:375.3px;width:47.0px;height:12.5px;background:#F0F0F0;border-top:1px solid #fff;border-left:1px solid #fff;border-right:1.6px solid #5c5c5c;border-bottom:1.6px solid #5c5c5c"></div>
<div class="t" style="left:774.50px;top:377.06px;font-size:7.85px;font-weight:normal;color:#b4b4b4;transform:scaleX(0.878);transform-origin:0 0;">Interrompi</div>
<div class="a" style="left:828.1px;top:355.1px;width:8.899999999999977px;height:4.199999999999989px;background:#F2F2F2;border-top:1px solid #fff;border-left:1px solid #fff;border-right:1.6px solid #5c5c5c;border-bottom:1.6px solid #5c5c5c"></div>
<div class="a" style="left:830.6px;top:355.8px;width:0;height:0;border-left:2px solid transparent;border-right:2px solid transparent;border-bottom:2px solid #000"></div>
<svg class="a" style="left:0;top:0" width="840" height="32" viewBox="0 0 840 32"><rect x="1.6" y="14.2" width="13.9" height="13.400000000000002" fill="#FAFAFA"/><path d="M1.6 27.6 V14.2 H15.5" stroke="#fff" stroke-width="1" fill="none"/><path d="M1.6 27.6 H15.5 V14.2" stroke="#5a5a5a" stroke-width="1.2" fill="none"/><g transform="translate(2.950000000000001,15.399999999999999) scale(0.93)"><path d="M2 1 H7 L10 4 V11 H2 Z" fill="#fff" stroke="#666" stroke-width="0.9"/><path d="M10 5 V11.5 H2.5" stroke="#333" stroke-width="1" fill="none"/></g><rect x="16" y="14.2" width="14.5" height="13.400000000000002" fill="#FAFAFA"/><path d="M16 27.6 V14.2 H30.5" stroke="#fff" stroke-width="1" fill="none"/><path d="M16 27.6 H30.5 V14.2" stroke="#5a5a5a" stroke-width="1.2" fill="none"/><g transform="translate(17.65,15.399999999999999) scale(0.93)"><path d="M1 4 H5 L6 5 H10 V11 H1 Z" fill="#C8A838" stroke="#8A7020" stroke-width="0.6"/><ellipse cx="6" cy="8" rx="4.5" ry="3" fill="#E8C448"/><path d="M8 2 L11 1" stroke="#B090C0" stroke-width="0.8"/></g><rect x="31" y="14.2" width="14" height="13.400000000000002" fill="#FAFAFA"/><path d="M31 27.6 V14.2 H45" stroke="#fff" stroke-width="1" fill="none"/><path d="M31 27.6 H45 V14.2" stroke="#5a5a5a" stroke-width="1.2" fill="none"/><g transform="translate(32.4,15.399999999999999) scale(0.93)"><rect x="1" y="1" width="10" height="10" fill="#203C90"/><rect x="3" y="1.5" width="6" height="3.5" fill="#C8D0E8"/><rect x="3.5" y="7" width="5" height="4" fill="#5870B0"/></g><rect x="45.5" y="14.2" width="14.0" height="13.400000000000002" fill="#FAFAFA"/><path d="M45.5 27.6 V14.2 H59.5" stroke="#fff" stroke-width="1" fill="none"/><path d="M45.5 27.6 H59.5 V14.2" stroke="#5a5a5a" stroke-width="1.2" fill="none"/><g transform="translate(46.9,15.399999999999999) scale(0.93)"><rect x="1" y="4" width="9" height="7" fill="#4060A0"/><rect x="3" y="6" width="5" height="5" fill="#9ab"/><text x="1" y="5" font-size="5" fill="#C03030" font-family="Liberation Sans">DIS</text></g><rect x="60" y="14.2" width="14" height="13.400000000000002" fill="#FAFAFA"/><path d="M60 27.6 V14.2 H74" stroke="#fff" stroke-width="1" fill="none"/><path d="M60 27.6 H74 V14.2" stroke="#5a5a5a" stroke-width="1.2" fill="none"/><g transform="translate(61.4,15.399999999999999) scale(0.93)"><rect x="1.5" y="1.5" width="8" height="9.5" fill="#FAF4E8" stroke="#ccc" stroke-width="0.6"/><path d="M3 10 L10 3" stroke="#C8B080" stroke-width="2"/></g><rect x="84" y="14.2" width="12" height="13.400000000000002" fill="#FAFAFA"/><path d="M84 27.6 V14.2 H96" stroke="#fff" stroke-width="1" fill="none"/><path d="M84 27.6 H96 V14.2" stroke="#5a5a5a" stroke-width="1.2" fill="none"/><g transform="translate(84.4,15.399999999999999) scale(0.93)"><path d="M1.5 1.5 L10.5 10.5 M10.5 1.5 L1.5 10.5" stroke="#1E5A30" stroke-width="1.5"/><circle cx="6" cy="6" r="1.8" fill="#3A7A50"/><path d="M0.5 0.5 L3 1 L1 3 Z M11.5 0.5 L9 1 L11 3 Z M0.5 11.5 L3 11 L1 9 Z M11.5 11.5 L9 11 L11 9 Z" fill="#1E5A30"/></g><rect x="97" y="14.2" width="13" height="13.400000000000002" fill="#FAFAFA"/><path d="M97 27.6 V14.2 H110" stroke="#fff" stroke-width="1" fill="none"/><path d="M97 27.6 H110 V14.2" stroke="#5a5a5a" stroke-width="1.2" fill="none"/><g transform="translate(97.9,15.399999999999999) scale(0.93)"><circle cx="5" cy="5" r="3.6" fill="#E8E0B0" stroke="#8A8A50" stroke-width="1.4"/><path d="M7.5 7.5 L10.5 10.5" stroke="#8A8A50" stroke-width="2"/><circle cx="5" cy="5" r="0.8" fill="#554"/></g><rect x="111" y="14.2" width="13" height="13.400000000000002" fill="#FAFAFA"/><path d="M111 27.6 V14.2 H124" stroke="#fff" stroke-width="1" fill="none"/><path d="M111 27.6 H124 V14.2" stroke="#5a5a5a" stroke-width="1.2" fill="none"/><g transform="translate(111.9,15.399999999999999) scale(0.93)"><circle cx="5" cy="5" r="3.6" fill="#E8E0B0" stroke="#8A8A50" stroke-width="1.4"/><path d="M7.5 7.5 L10.5 10.5" stroke="#8A8A50" stroke-width="2"/><path d="M3.5 5 H6.5" stroke="#554" stroke-width="0.8"/></g><rect x="126" y="14.2" width="13" height="13.400000000000002" fill="#FAFAFA"/><path d="M126 27.6 V14.2 H139" stroke="#fff" stroke-width="1" fill="none"/><path d="M126 27.6 H139 V14.2" stroke="#5a5a5a" stroke-width="1.2" fill="none"/><g transform="translate(126.9,15.399999999999999) scale(0.93)"><path d="M6 0.5 V11.5 M0.5 6 H11.5" stroke="#2878B0" stroke-width="1.6"/><path d="M6 0 L4 2.5 H8 Z M6 12 L4 9.5 H8 Z M0 6 L2.5 4 V8 Z M12 6 L9.5 4 V8 Z" fill="#2878B0"/></g><rect x="141" y="14.2" width="13" height="13.400000000000002" fill="#FAFAFA"/><path d="M141 27.6 V14.2 H154" stroke="#fff" stroke-width="1" fill="none"/><path d="M141 27.6 H154 V14.2" stroke="#5a5a5a" stroke-width="1.2" fill="none"/><g transform="translate(141.9,15.399999999999999) scale(0.93)"><path d="M2 5 Q6 1 10 4 M10 7 Q6 11 2 8" stroke="#2070A0" stroke-width="1.8" fill="none"/><path d="M10 1 L10.5 5 L7 4.5 Z M2 11 L1.5 7 L5 7.5 Z" fill="#2070A0"/></g><rect x="156" y="14.2" width="12.5" height="13.400000000000002" fill="#FAFAFA"/><path d="M156 27.6 V14.2 H168.5" stroke="#fff" stroke-width="1" fill="none"/><path d="M156 27.6 H168.5 V14.2" stroke="#5a5a5a" stroke-width="1.2" fill="none"/><g transform="translate(156.65,15.399999999999999) scale(0.93)"><circle cx="6" cy="6" r="5" fill="#fff" stroke="#333" stroke-width="0.8"/><path d="M10 2.5 A5 5 0 0 1 2.5 10 Z" fill="#111"/></g><rect x="178" y="14.2" width="12.5" height="13.400000000000002" fill="#FAFAFA"/><path d="M178 27.6 V14.2 H190.5" stroke="#fff" stroke-width="1" fill="none"/><path d="M178 27.6 H190.5 V14.2" stroke="#5a5a5a" stroke-width="1.2" fill="none"/><g transform="translate(178.65,15.399999999999999) scale(0.93)"><rect x="1" y="1" width="5" height="3" fill="#F0A060"/><circle cx="8" cy="3" r="0.8" fill="#6060C0"/><circle cx="2" cy="8" r="0.8" fill="#6060C0"/><path d="M5 6 H11 L7 10 H11" stroke="#2080A0" stroke-width="1.8" fill="none"/></g><rect x="192" y="14.2" width="12.5" height="13.400000000000002" fill="#FAFAFA"/><path d="M192 27.6 V14.2 H204.5" stroke="#fff" stroke-width="1" fill="none"/><path d="M192 27.6 H204.5 V14.2" stroke="#5a5a5a" stroke-width="1.2" fill="none"/><g transform="translate(192.65,15.399999999999999) scale(0.93)"><rect x="1" y="1" width="5" height="3" fill="#F0A060"/><circle cx="8" cy="3" r="0.8" fill="#6060C0"/><circle cx="2" cy="8" r="0.8" fill="#6060C0"/><path d="M7 5 H10 M8.5 5 V10 M7 10 H10" stroke="#333" stroke-width="1"/></g><rect x="206" y="14.2" width="12.5" height="13.400000000000002" fill="#FAFAFA"/><path d="M206 27.6 V14.2 H218.5" stroke="#fff" stroke-width="1" fill="none"/><path d="M206 27.6 H218.5 V14.2" stroke="#5a5a5a" stroke-width="1.2" fill="none"/><g transform="translate(206.65,15.399999999999999) scale(0.93)"><rect x="1" y="1" width="5" height="3" fill="#F0A060"/><circle cx="8" cy="3" r="0.8" fill="#6060C0"/><circle cx="2" cy="8" r="0.8" fill="#6060C0"/><path d="M4 10 L7 7 L10 9 L11 6" stroke="#555" stroke-width="1.2" fill="none"/></g><rect x="220" y="14.2" width="12.5" height="13.400000000000002" fill="#FAFAFA"/><path d="M220 27.6 V14.2 H232.5" stroke="#fff" stroke-width="1" fill="none"/><path d="M220 27.6 H232.5 V14.2" stroke="#5a5a5a" stroke-width="1.2" fill="none"/><g transform="translate(220.65,15.399999999999999) scale(0.93)"><path d="M1 2 H10 L7 6 H10 L5 11" stroke="#2080A0" stroke-width="2.4" fill="none"/></g><rect x="243" y="14.2" width="12.5" height="13.400000000000002" fill="#FAFAFA"/><path d="M243 27.6 V14.2 H255.5" stroke="#fff" stroke-width="1" fill="none"/><path d="M243 27.6 H255.5 V14.2" stroke="#5a5a5a" stroke-width="1.2" fill="none"/><g transform="translate(243.65,15.399999999999999) scale(0.93)"><circle cx="3.5" cy="2.5" r="0.95" fill="#6A1010"/><g fill="#4A9A5A"><circle cx="6.5" cy="5.8" r="1.5"/><circle cx="6.5" cy="9.2" r="1.5"/><circle cx="4.8" cy="7.5" r="1.5"/><circle cx="8.2" cy="7.5" r="1.5"/><circle cx="6.5" cy="7.5" r="1.2" fill="#8ACA90"/></g></g><rect x="257" y="14.2" width="13" height="13.400000000000002" fill="#FAFAFA"/><path d="M257 27.6 V14.2 H270" stroke="#fff" stroke-width="1" fill="none"/><path d="M257 27.6 H270 V14.2" stroke="#5a5a5a" stroke-width="1.2" fill="none"/><g transform="translate(257.9,15.399999999999999) scale(0.93)"><circle cx="2" cy="2" r="0.95" fill="#6A1010"/><circle cx="5.5" cy="2" r="0.95" fill="#6A1010"/><circle cx="9" cy="2" r="0.95" fill="#6A1010"/><g fill="#4A9A5A"><circle cx="6.5" cy="5.8" r="1.5"/><circle cx="6.5" cy="9.2" r="1.5"/><circle cx="4.8" cy="7.5" r="1.5"/><circle cx="8.2" cy="7.5" r="1.5"/><circle cx="6.5" cy="7.5" r="1.2" fill="#8ACA90"/></g></g><rect x="272" y="14.2" width="12.5" height="13.400000000000002" fill="#FAFAFA"/><path d="M272 27.6 V14.2 H284.5" stroke="#fff" stroke-width="1" fill="none"/><path d="M272 27.6 H284.5 V14.2" stroke="#5a5a5a" stroke-width="1.2" fill="none"/><g transform="translate(272.65,15.399999999999999) scale(0.93)"><circle cx="1.8" cy="6" r="0.95" fill="#6A1010"/><circle cx="3" cy="2.8" r="0.95" fill="#6A1010"/><circle cx="6" cy="1.5" r="0.95" fill="#6A1010"/><circle cx="9" cy="2.5" r="0.95" fill="#6A1010"/><circle cx="2.8" cy="9.5" r="0.95" fill="#6A1010"/><g fill="#4A9A5A"><circle cx="6.5" cy="5.8" r="1.5"/><circle cx="6.5" cy="9.2" r="1.5"/><circle cx="4.8" cy="7.5" r="1.5"/><circle cx="8.2" cy="7.5" r="1.5"/><circle cx="6.5" cy="7.5" r="1.2" fill="#8ACA90"/></g></g><rect x="286" y="14.2" width="13" height="13.400000000000002" fill="#FAFAFA"/><path d="M286 27.6 V14.2 H299" stroke="#fff" stroke-width="1" fill="none"/><path d="M286 27.6 H299 V14.2" stroke="#5a5a5a" stroke-width="1.2" fill="none"/><g transform="translate(286.9,15.399999999999999) scale(0.93)"><circle cx="2" cy="2" r="0.95" fill="#6A1010"/><circle cx="5.5" cy="2.5" r="0.95" fill="#6A1010"/><circle cx="2.5" cy="5.5" r="0.95" fill="#6A1010"/><path d="M4 10.5 L10.5 4" stroke="#D8B890" stroke-width="2.6" stroke-linecap="round"/></g><rect x="300" y="14.2" width="13" height="13.400000000000002" fill="#FAFAFA"/><path d="M300 27.6 V14.2 H313" stroke="#fff" stroke-width="1" fill="none"/><path d="M300 27.6 H313 V14.2" stroke="#5a5a5a" stroke-width="1.2" fill="none"/><g transform="translate(300.9,15.399999999999999) scale(0.93)"><circle cx="2" cy="2.5" r="0.95" fill="#6A1010"/><circle cx="6" cy="2" r="0.95" fill="#6A1010"/><path d="M3 4.5 L9 10.5 M9 4.5 L3 10.5" stroke="#D88878" stroke-width="2"/></g><rect x="315" y="14.2" width="12.5" height="13.400000000000002" fill="#FAFAFA"/><path d="M315 27.6 V14.2 H327.5" stroke="#fff" stroke-width="1" fill="none"/><path d="M315 27.6 H327.5 V14.2" stroke="#5a5a5a" stroke-width="1.2" fill="none"/><g transform="translate(315.65,15.399999999999999) scale(0.93)"><ellipse cx="5" cy="5" rx="3.5" ry="2.5" fill="none" stroke="#C060B0" stroke-width="0.8" transform="rotate(-35 5 5)"/><path d="M2 9 L9 2" stroke="#B050A0" stroke-width="0.7"/><path d="M4 10.5 L10.5 5" stroke="#D8B890" stroke-width="2.2" stroke-linecap="round"/></g><rect x="339" y="14.2" width="11.5" height="13.400000000000002" fill="#FAFAFA"/><path d="M339 27.6 V14.2 H350.5" stroke="#fff" stroke-width="1" fill="none"/><path d="M339 27.6 H350.5 V14.2" stroke="#5a5a5a" stroke-width="1.2" fill="none"/><g transform="translate(339.15,15.399999999999999) scale(0.93)"><rect x="1" y="0.5" width="10" height="1.8" fill="#283868"/><path d="M6 2.3 V4" stroke="#283868" stroke-width="0.8"/><path d="M6 4 C8.8 6 9.5 8.5 6 11 C2.5 8.5 3.2 6 6 4 Z" fill="#E0A030" stroke="#A06010" stroke-width="0.5"/></g><rect x="353" y="14.2" width="12.5" height="13.400000000000002" fill="#FAFAFA"/><path d="M353 27.6 V14.2 H365.5" stroke="#fff" stroke-width="1" fill="none"/><path d="M353 27.6 H365.5 V14.2" stroke="#5a5a5a" stroke-width="1.2" fill="none"/><g transform="translate(353.65,15.399999999999999) scale(0.93)"><rect x="1" y="1" width="9" height="10" fill="none" stroke="#888" stroke-width="0.8"/><path d="M3 10 L9 3" stroke="#B08080" stroke-width="1.2"/></g><rect x="367" y="14.2" width="12.5" height="13.400000000000002" fill="#FAFAFA"/><path d="M367 27.6 V14.2 H379.5" stroke="#fff" stroke-width="1" fill="none"/><path d="M367 27.6 H379.5 V14.2" stroke="#5a5a5a" stroke-width="1.2" fill="none"/><g transform="translate(367.65,15.399999999999999) scale(0.93)"><rect x="1" y="1.5" width="9" height="9" fill="#fff" stroke="#555" stroke-width="0.9"/><path d="M4 1.5 V10.5 M7 1.5 V10.5 M1 4.5 H10 M1 7.5 H10" stroke="#555" stroke-width="0.8"/></g><rect x="381" y="14.2" width="12.5" height="13.400000000000002" fill="#FAFAFA"/><path d="M381 27.6 V14.2 H393.5" stroke="#fff" stroke-width="1" fill="none"/><path d="M381 27.6 H393.5 V14.2" stroke="#5a5a5a" stroke-width="1.2" fill="none"/><g transform="translate(381.65,15.399999999999999) scale(0.93)"><path d="M5.5 2 C8.5 5 9 8 5.5 11 C2 8.5 3 6 5.5 2 Z" fill="#F0A030"/><path d="M5.5 6 C7 8 6.5 10 5.5 10.5 C4.5 10 4 8 5.5 6 Z" fill="#FFF0C0"/></g><rect x="403.3" y="14.2" width="13.0" height="13.400000000000002" fill="#FAFAFA"/><path d="M403.3 27.6 V14.2 H416.3" stroke="#fff" stroke-width="1" fill="none"/><path d="M403.3 27.6 H416.3 V14.2" stroke="#5a5a5a" stroke-width="1.2" fill="none"/><g transform="translate(404.2,15.399999999999999) scale(0.93)"><path d="M1 2 L10 10 M10 2 L1 10" stroke="#606870" stroke-width="1"/><path d="M4 10 L10 5" stroke="#B8C098" stroke-width="1.8"/></g><rect x="425.4" y="14.2" width="12.900000000000034" height="13.400000000000002" fill="#FAFAFA"/><path d="M425.4 27.6 V14.2 H438.3" stroke="#fff" stroke-width="1" fill="none"/><path d="M425.4 27.6 H438.3 V14.2" stroke="#5a5a5a" stroke-width="1.2" fill="none"/><g transform="translate(426.25,15.399999999999999) scale(0.93)"><text x="0" y="5" font-size="4.5" fill="#206050" font-family="Liberation Sans">fck</text><text x="4" y="10.5" font-size="4.5" fill="#B02050" font-family="Liberation Sans">fyk</text></g><rect x="438.8" y="14.2" width="14.5" height="13.400000000000002" fill="#FAFAFA"/><path d="M438.8 27.6 V14.2 H453.3" stroke="#fff" stroke-width="1" fill="none"/><path d="M438.8 27.6 H453.3 V14.2" stroke="#5a5a5a" stroke-width="1.2" fill="none"/><g transform="translate(440.45,15.399999999999999) scale(0.93)"><text x="0" y="5" font-size="4.5" fill="#404040" font-family="Liberation Sans">λs</text><text x="6" y="4" font-size="3.5" fill="#20A080" font-family="Liberation Sans">cf</text><text x="4" y="10.5" font-size="4.5" fill="#B02050" font-family="Liberation Sans">ds</text></g></svg>
<svg class="a" style="left:0;top:0" width="840" height="627" viewBox="0 0 840 627"><defs><pattern id="gr" x="0.5" y="0.5" width="5.6" height="5.2" patternUnits="userSpaceOnUse"><path d="M0 0 H5.6 M0 0 V5.2" stroke="#F7C0C8" stroke-width="0.7" opacity="0.45" fill="none"/></pattern><clipPath id="zc"><circle cx="575.3" cy="479.5" r="125"/></clipPath></defs><g stroke="#777" fill="none"><path d="M63.5 96 H314" stroke-width="1.1"/><path d="M74.7 84.5 V107.8 M304.2 84.5 V107.8" stroke-width="1.3"/><circle cx="74.7" cy="96" r="3" stroke-width="1"/><circle cx="304.2" cy="96" r="3" stroke-width="1"/><path d="M43 117 V585" stroke-width="1.8"/><path d="M32 128.3 H54.5 M32 573.2 H54" stroke-width="1.2"/><circle cx="43" cy="128.3" r="3" stroke-width="1"/><circle cx="43" cy="573.2" r="3" stroke-width="1"/></g><path d="M182.26 74.02 L184.81 70.90 V87.40 M190.82 78.97 L189.00 77.13 V72.73 L190.82 70.90 H194.47 L196.30 72.73 V77.13 L194.47 78.97 Z M190.82 78.97 L189.00 80.80 V85.57 L190.82 87.40 H194.47 L196.30 85.57 V80.80 L194.47 78.97" fill="none" stroke="#505050" stroke-width="1.2" stroke-linejoin="round" stroke-linecap="round" /><path d="M0.00 -15.11 L1.70 -17.00 H5.10 L6.80 -15.11 V-10.58 L5.10 -8.69 H2.72 M5.10 -8.69 L6.80 -6.80 V-1.89 L5.10 0.00 H1.70 L0.00 -1.89 M15.63 -17.00 H9.34 V-9.82 H14.10 L15.80 -7.93 V-1.89 L14.10 0.00 H10.70 L9.00 -1.89" fill="none" stroke="#505050" stroke-width="1.15" stroke-linejoin="round" stroke-linecap="round" transform="translate(34.4,359.2) rotate(-90)"/><rect x="73.6" y="127.2" width="231.2" height="447.2" fill="#B83C12"/><rect x="75" y="128.5" width="228.5" height="444.5" fill="#FF6A22"/><rect x="79" y="132.5" width="220.5" height="437.5" fill="#F44414"/><rect x="81.2" y="134.7" width="216.1" height="433.1" fill="#EC1420"/><rect x="74" y="127.5" width="230.5" height="446.5" fill="url(#gr)"/><path d="M87.5 140.5 H291.5 V155.5 H217.6 A23 23 0 0 0 194.6 178.5 V523 A23 23 0 0 0 217.6 546 H291.5 V560 H87.5 V546 H161.6 A23 23 0 0 0 184.6 523 V178.5 A23 23 0 0 0 161.6 155.5 H87.5 Z" fill="#A83A52"/><path d="M87.5 140.5 H291.5 V155.5 H217.6 A23 23 0 0 0 194.6 178.5 V523 A23 23 0 0 0 217.6 546 H291.5 V560 H87.5 V546 H161.6 A23 23 0 0 0 184.6 523 V178.5 A23 23 0 0 0 161.6 155.5 H87.5 Z" fill="url(#gr)"/><path d="M87.5 155.5 H161.6 A23 23 0 0 1 184.6 178.5 V523 A23 23 0 0 1 161.6 546 H87.5 Z" fill="#fff" stroke="#30107A" stroke-width="3.3"/><path d="M291.5 155.5 H217.6 A23 23 0 0 0 194.6 178.5 V523 A23 23 0 0 0 217.6 546 H291.5 Z" fill="#fff" stroke="#30107A" stroke-width="3.3"/><path d="M87.5 155.5 V140.5 H291.5 V155.5 M87.5 546 V560 H291.5 V546" fill="none" stroke="#0A0008" stroke-width="3.2"/><path d="M189 560 V540 M186.5 544 L189 540 L191.5 544 M189 560 H211 M207 557.5 L211 560 L207 562.5" stroke="#F0B070" stroke-width="0.9" fill="none"/><path d="M78.86 128.87 L80.19 127.30 V135.60" fill="none" stroke="#6A1A50" stroke-width="1.15" stroke-linejoin="round" stroke-linecap="round" /><path d="M295.50 129.41 L296.45 128.30 H298.35 L299.30 129.22 V131.44 L295.50 135.49 V136.60 H299.30" fill="none" stroke="#6A1A50" stroke-width="1.15" stroke-linejoin="round" stroke-linecap="round" /><path d="M295.30 161.62 L296.25 160.70 H298.15 L299.10 161.62 V163.84 L298.15 164.76 H296.82 M298.15 164.76 L299.10 165.68 V168.08 L298.15 169.00 H296.25 L295.30 168.08" fill="none" stroke="#6A1A50" stroke-width="1.15" stroke-linejoin="round" stroke-linecap="round" /><path d="M75.06 161.27 L76.39 159.70 V168.00 M81.51 160.44 L80.75 159.70 H78.85 L77.90 160.62 V167.08 L78.85 168.00 H80.75 L81.70 167.08 V164.31 L80.75 163.39 H77.90" fill="none" stroke="#6A1A50" stroke-width="1.15" stroke-linejoin="round" stroke-linecap="round" /><path d="M150.76 162.07 L152.09 160.50 V168.80 M158.11 160.50 H154.59 V164.00 H157.25 L158.20 164.93 V167.88 L157.25 168.80 H155.35 L154.40 167.88" fill="none" stroke="#3A3A68" stroke-width="1.15" stroke-linejoin="round" stroke-linecap="round" /><path d="M221.05 168.10 V159.80 L218.20 165.52 V165.79 H222.19" fill="none" stroke="#3A3A68" stroke-width="1.15" stroke-linejoin="round" stroke-linecap="round" /><path d="M170.76 182.17 L172.09 180.60 V188.90 M177.65 188.90 V180.60 L174.80 186.32 V186.59 H178.79" fill="none" stroke="#3A3A68" stroke-width="1.15" stroke-linejoin="round" stroke-linecap="round" /><path d="M201.81 180.60 H198.29 V184.10 H200.95 L201.90 185.03 V187.98 L200.95 188.90 H199.05 L198.10 187.98" fill="none" stroke="#3A3A68" stroke-width="1.15" stroke-linejoin="round" stroke-linecap="round" /><path d="M170.66 514.67 L171.99 513.10 V521.40 M175.10 514.02 L176.05 513.10 H177.95 L178.90 514.02 V516.24 L177.95 517.16 H176.62 M177.95 517.16 L178.90 518.08 V520.48 L177.95 521.40 H176.05 L175.10 520.48" fill="none" stroke="#3a3a4a" stroke-width="1.15" stroke-linejoin="round" stroke-linecap="round" /><path d="M201.51 513.84 L200.75 513.10 H198.85 L197.90 514.02 V520.48 L198.85 521.40 H200.75 L201.70 520.48 V517.71 L200.75 516.79 H197.90" fill="none" stroke="#3a3a4a" stroke-width="1.15" stroke-linejoin="round" stroke-linecap="round" /><path d="M150.66 534.67 L151.99 533.10 V541.40 M154.80 534.21 L155.75 533.10 H157.65 L158.60 534.02 V536.24 L154.80 540.29 V541.40 H158.60" fill="none" stroke="#3a3a4a" stroke-width="1.15" stroke-linejoin="round" stroke-linecap="round" /><path d="M217.90 533.10 H221.70 V534.02 L219.23 541.40" fill="none" stroke="#3a3a4a" stroke-width="1.15" stroke-linejoin="round" stroke-linecap="round" /><path d="M74.96 533.67 L76.29 532.10 V540.40 M78.56 533.67 L79.89 532.10 V540.40" fill="none" stroke="#6A1A50" stroke-width="1.15" stroke-linejoin="round" stroke-linecap="round" /><path d="M296.95 536.96 L296.00 536.04 V533.82 L296.95 532.90 H298.85 L299.80 533.82 V536.04 L298.85 536.96 Z M296.95 536.96 L296.00 537.88 V540.28 L296.95 541.20 H298.85 L299.80 540.28 V537.88 L298.85 536.96" fill="none" stroke="#6A1A50" stroke-width="1.15" stroke-linejoin="round" stroke-linecap="round" /><path d="M74.96 566.97 L76.29 565.40 V573.70 M78.75 573.70 L77.80 572.78 V566.32 L78.75 565.40 H80.65 L81.60 566.32 V572.78 L80.65 573.70 Z M78.08 572.32 L81.31 566.78" fill="none" stroke="#6A1A50" stroke-width="1.15" stroke-linejoin="round" stroke-linecap="round" /><path d="M299.80 568.65 H296.95 L296.00 567.73 V565.42 L296.95 564.50 H298.85 L299.80 565.42 V571.88 L298.85 572.80 H296.95 L296.19 572.06" fill="none" stroke="#6A1A50" stroke-width="1.15" stroke-linejoin="round" stroke-linecap="round" /><path d="M347.40 196.00 H352.90 M350.15 196.00 V209.30 M359.82 208.41 L358.72 209.30 H355.97 L354.60 207.82 V201.91 L355.97 200.43 H358.72 L360.10 201.91 V204.87 H354.60 M361.80 209.30 V200.43 M361.80 201.91 L362.90 200.43 H363.59 L364.55 201.91 V209.30 M364.55 201.91 L365.51 200.43 H366.20 L367.30 201.91 V209.30 M369.00 213.73 V200.43 M369.00 201.91 L370.38 200.43 H373.12 L374.50 201.91 V207.82 L373.12 209.30 H370.38 L369.00 207.82 M381.43 208.41 L380.32 209.30 H377.57 L376.20 207.82 V201.91 L377.57 200.43 H380.32 L381.70 201.91 V204.87 H376.20 M384.09 209.30 V200.43 M384.09 202.65 L386.15 200.43 H388.90 M391.01 201.32 L391.97 200.43 H394.72 L396.10 201.91 V209.30 M396.10 204.57 H391.97 L390.60 205.90 V207.82 L391.97 209.30 H394.72 L396.10 207.82 M400.27 196.00 V207.82 L401.37 209.30 H402.75 M399.17 200.43 H401.37 M405.00 200.43 V207.82 L406.38 209.30 H409.12 L410.50 207.82 M410.50 200.43 V209.30 M412.89 209.30 V200.43 M412.89 202.65 L414.95 200.43 H417.70 M424.62 208.41 L423.52 209.30 H420.77 L419.40 207.82 V201.91 L420.77 200.43 H423.52 L424.90 201.91 V204.87 H419.40 M439.30 196.00 V209.30 M439.30 201.91 L437.92 200.43 H435.17 L433.80 201.91 V207.82 L435.17 209.30 H437.92 L439.30 207.82 M443.75 200.43 V209.30 M443.75 197.48 V196.15 M460.62 208.41 L459.52 209.30 H456.77 L455.40 207.82 V201.91 L456.77 200.43 H459.52 L460.90 201.91 V204.87 H455.40 M468.10 201.62 L466.72 200.43 H463.97 L462.60 201.91 V203.39 L463.97 204.87 H466.72 L468.10 206.34 V207.82 L466.72 209.30 H463.97 L462.60 208.12 M469.80 213.73 V200.43 M469.80 201.91 L471.17 200.43 H473.92 L475.30 201.91 V207.82 L473.92 209.30 H471.17 L469.80 207.82 M478.38 209.30 L477.00 207.82 V201.91 L478.38 200.43 H481.12 L482.50 201.91 V207.82 L481.12 209.30 Z M489.70 201.62 L488.32 200.43 H485.57 L484.20 201.91 V203.39 L485.57 204.87 H488.32 L489.70 206.34 V207.82 L488.32 209.30 H485.57 L484.20 208.12 M494.15 200.43 V209.30 M494.15 197.48 V196.15 M498.88 200.43 H504.10 L498.60 209.30 H504.10 M508.55 200.43 V209.30 M508.55 197.48 V196.15 M514.38 209.30 L513.00 207.82 V201.91 L514.38 200.43 H517.12 L518.50 201.91 V207.82 L517.12 209.30 Z M520.20 209.30 V200.43 M520.20 201.91 L521.58 200.43 H524.33 L525.70 201.91 V209.30 M532.62 208.41 L531.52 209.30 H528.77 L527.40 207.82 V201.91 L528.77 200.43 H531.52 L532.90 201.91 V204.87 H527.40 M545.92 195.11 L543.86 198.07 V207.23 L545.92 210.19 M554.23 197.18 L553.12 196.00 H550.38 L549.00 197.48 V207.82 L550.38 209.30 H553.12 L554.50 207.82 V203.39 L553.12 201.91 H549.00 M557.58 209.30 L556.20 207.82 V197.48 L557.58 196.00 H560.33 L561.70 197.48 V207.82 L560.33 209.30 Z M556.61 207.08 L561.29 198.22 M566.15 196.00 V198.96 M571.98 195.11 L574.04 198.07 V207.23 L571.98 210.19 M580.55 201.02 V201.91 M580.55 208.41 V209.30" fill="none" stroke="#444" stroke-width="1.2" stroke-linejoin="round" stroke-linecap="round" /><path d="M347.4 226.3 H402.5 M347.4 243.6 H402.5" stroke="#0A1A9A" stroke-width="3"/><path d="M347.4 261.4 H402.5" stroke="#C01A20" stroke-width="3"/><path d="M423.02 233.20 V220.20 L418.90 229.16 V229.59 H424.67 M427.47 226.56 L426.10 225.11 V221.64 L427.47 220.20 H430.22 L431.60 221.64 V225.11 L430.22 226.56 Z M427.47 226.56 L426.10 228.00 V231.76 L427.47 233.20 H430.22 L431.60 231.76 V228.00 L430.22 226.56 M434.67 233.20 L433.30 231.76 V221.64 L434.67 220.20 H437.42 L438.80 221.64 V231.76 L437.42 233.20 Z M433.71 231.03 L438.39 222.37 M459.85 220.20 H456.27 L455.31 221.36 V232.04 L456.27 233.20 H459.85 M470.12 226.70 H473.97 M488.65 220.20 H485.07 L484.11 221.36 V232.04 L485.07 233.20 H488.65 M492.27 233.20 L490.90 231.76 V225.98 L492.27 224.53 H495.02 L496.40 225.98 V231.76 L495.02 233.20 Z M498.10 233.20 V224.53 M498.10 225.98 L499.47 224.53 H502.22 L503.60 225.98 V233.20 M507.77 220.20 V231.76 L508.87 233.20 H510.25 M506.67 224.53 H508.87 M513.88 233.20 L512.50 231.76 V225.98 L513.88 224.53 H516.62 L518.00 225.98 V231.76 L516.62 233.20 Z M520.39 233.20 V224.53 M520.39 226.70 L522.45 224.53 H525.20 M526.90 233.20 V224.53 M526.90 225.98 L528.27 224.53 H531.02 L532.40 225.98 V233.20 M535.48 233.20 L534.10 231.76 V225.98 L535.48 224.53 H538.23 L539.60 225.98 V231.76 L538.23 233.20 Z M548.50 221.64 L549.88 220.20 H552.62 L554.00 221.64 V225.11 L552.62 226.56 H550.70 M552.62 226.56 L554.00 228.00 V231.76 L552.62 233.20 H549.88 L548.50 231.76" fill="none" stroke="#444" stroke-width="1.2" stroke-linejoin="round" stroke-linecap="round" /><path d="M423.02 250.60 V237.60 L418.90 246.56 V246.99 H424.67 M427.47 243.96 L426.10 242.51 V239.04 L427.47 237.60 H430.22 L431.60 239.04 V242.51 L430.22 243.96 Z M427.47 243.96 L426.10 245.40 V249.16 L427.47 250.60 H430.22 L431.60 249.16 V245.40 L430.22 243.96 M434.67 250.60 L433.30 249.16 V239.04 L434.67 237.60 H437.42 L438.80 239.04 V249.16 L437.42 250.60 Z M433.71 248.43 L438.39 239.77 M459.85 237.60 H456.27 L455.31 238.76 V249.44 L456.27 250.60 H459.85 M470.12 244.10 H473.97 M488.65 237.60 H485.07 L484.11 238.76 V249.44 L485.07 250.60 H488.65 M492.27 250.60 L490.90 249.16 V243.38 L492.27 241.93 H495.02 L496.40 243.38 V249.16 L495.02 250.60 Z M498.10 250.60 V241.93 M498.10 243.38 L499.47 241.93 H502.22 L503.60 243.38 V250.60 M507.77 237.60 V249.16 L508.87 250.60 H510.25 M506.67 241.93 H508.87 M513.88 250.60 L512.50 249.16 V243.38 L513.88 241.93 H516.62 L518.00 243.38 V249.16 L516.62 250.60 Z M520.39 250.60 V241.93 M520.39 244.10 L522.45 241.93 H525.20 M526.90 250.60 V241.93 M526.90 243.38 L528.27 241.93 H531.02 L532.40 243.38 V250.60 M535.48 250.60 L534.10 249.16 V243.38 L535.48 241.93 H538.23 L539.60 243.38 V249.16 L538.23 250.60 Z M552.62 250.60 V237.60 L548.50 246.56 V246.99 H554.27" fill="none" stroke="#444" stroke-width="1.2" stroke-linejoin="round" stroke-linecap="round" /><path d="M424.40 261.50 H420.27 L418.90 260.06 V256.44 L420.27 255.00 H423.02 L424.40 256.44 V266.56 L423.02 268.00 H420.27 L419.17 266.84 M430.22 268.00 V255.00 L426.10 263.96 V264.39 H431.87 M437.42 268.00 V255.00 L433.30 263.96 V264.39 H439.07 M459.85 255.00 H456.27 L455.31 256.16 V266.84 L456.27 268.00 H459.85" fill="none" stroke="#444" stroke-width="1.2" stroke-linejoin="round" stroke-linecap="round" /><rect x="349" y="307" width="88.3" height="266" fill="#fff" stroke="#555" stroke-width="1.1"/><rect x="356.7" y="323.90" width="35.6" height="17.95" fill="#FFF700"/><rect x="356.7" y="341.65" width="35.6" height="17.95" fill="#FFD200"/><rect x="356.7" y="341.15" width="35.6" height="1.2" fill="#fff" opacity="0.45"/><rect x="356.7" y="359.39" width="35.6" height="17.95" fill="#FFAA00"/><rect x="356.7" y="358.89" width="35.6" height="1.2" fill="#fff" opacity="0.45"/><rect x="356.7" y="377.14" width="35.6" height="17.95" fill="#FF8A00"/><rect x="356.7" y="376.64" width="35.6" height="1.2" fill="#fff" opacity="0.45"/><rect x="356.7" y="394.88" width="35.6" height="17.95" fill="#FF6A08"/><rect x="356.7" y="394.38" width="35.6" height="1.2" fill="#fff" opacity="0.45"/><rect x="356.7" y="412.63" width="35.6" height="17.95" fill="#FF4010"/><rect x="356.7" y="412.13" width="35.6" height="1.2" fill="#fff" opacity="0.45"/><rect x="356.7" y="430.38" width="35.6" height="17.95" fill="#FF0A0A"/><rect x="356.7" y="429.88" width="35.6" height="1.2" fill="#fff" opacity="0.45"/><rect x="356.7" y="448.12" width="35.6" height="17.95" fill="#D81838"/><rect x="356.7" y="447.62" width="35.6" height="1.2" fill="#fff" opacity="0.45"/><rect x="356.7" y="465.87" width="35.6" height="17.95" fill="#B03050"/><rect x="356.7" y="465.37" width="35.6" height="1.2" fill="#fff" opacity="0.45"/><rect x="356.7" y="483.62" width="35.6" height="17.95" fill="#8C4068"/><rect x="356.7" y="483.12" width="35.6" height="1.2" fill="#fff" opacity="0.45"/><rect x="356.7" y="501.36" width="35.6" height="17.95" fill="#5A4C88"/><rect x="356.7" y="500.86" width="35.6" height="1.2" fill="#fff" opacity="0.45"/><rect x="356.7" y="519.11" width="35.6" height="17.95" fill="#2E74BC"/><rect x="356.7" y="518.61" width="35.6" height="1.2" fill="#fff" opacity="0.45"/><rect x="356.7" y="536.85" width="35.6" height="17.95" fill="#0E94E0"/><rect x="356.7" y="536.35" width="35.6" height="1.2" fill="#fff" opacity="0.45"/><path d="M401.96 319.92 L403.99 317.50 V330.30 M408.15 318.92 L409.60 317.50 H412.50 L413.95 318.92 V322.34 L412.50 323.76 H410.47 M412.50 323.76 L413.95 325.18 V328.88 L412.50 330.30 H409.60 L408.15 328.88 M416.95 330.30 L415.50 328.88 V318.92 L416.95 317.50 H419.85 L421.30 318.92 V328.88 L419.85 330.30 Z M415.94 328.17 L420.87 319.63 M424.30 330.30 L422.85 328.88 V318.92 L424.30 317.50 H427.20 L428.65 318.92 V328.88 L427.20 330.30 Z M423.29 328.17 L428.22 319.63" fill="none" stroke="#444" stroke-width="1.2" stroke-linejoin="round" stroke-linecap="round" /><path d="M401.96 337.66 L403.99 335.25 V348.05 M408.15 336.95 L409.60 335.25 H412.50 L413.95 336.67 V340.08 L408.15 346.34 V348.05 H413.95 M416.95 348.05 L415.50 346.62 V336.67 L416.95 335.25 H419.85 L421.30 336.67 V346.62 L419.85 348.05 Z M415.94 345.91 L420.87 337.38 M424.30 348.05 L422.85 346.62 V336.67 L424.30 335.25 H427.20 L428.65 336.67 V346.62 L427.20 348.05 Z M423.29 345.91 L428.22 337.38" fill="none" stroke="#444" stroke-width="1.2" stroke-linejoin="round" stroke-linecap="round" /><path d="M401.96 355.41 L403.99 352.99 V365.79 M409.31 355.41 L411.34 352.99 V365.79 M416.95 365.79 L415.50 364.37 V354.41 L416.95 352.99 H419.85 L421.30 354.41 V364.37 L419.85 365.79 Z M415.94 363.66 L420.87 355.13 M424.30 365.79 L422.85 364.37 V354.41 L424.30 352.99 H427.20 L428.65 354.41 V364.37 L427.20 365.79 Z M423.29 363.66 L428.22 355.13" fill="none" stroke="#444" stroke-width="1.2" stroke-linejoin="round" stroke-linecap="round" /><path d="M401.96 373.16 L403.99 370.74 V383.54 M409.60 383.54 L408.15 382.12 V372.16 L409.60 370.74 H412.50 L413.95 372.16 V382.12 L412.50 383.54 Z M408.59 381.41 L413.52 372.87 M416.95 383.54 L415.50 382.12 V372.16 L416.95 370.74 H419.85 L421.30 372.16 V382.12 L419.85 383.54 Z M415.94 381.41 L420.87 372.87 M424.30 383.54 L422.85 382.12 V372.16 L424.30 370.74 H427.20 L428.65 372.16 V382.12 L427.20 383.54 Z M423.29 381.41 L428.22 372.87" fill="none" stroke="#444" stroke-width="1.2" stroke-linejoin="round" stroke-linecap="round" /><path d="M406.60 394.88 H402.25 L400.80 393.46 V389.91 L402.25 388.48 H405.15 L406.60 389.91 V399.86 L405.15 401.28 H402.25 L401.09 400.15 M409.60 401.28 L408.15 399.86 V389.91 L409.60 388.48 H412.50 L413.95 389.91 V399.86 L412.50 401.28 Z M408.59 399.15 L413.52 390.62 M416.95 401.28 L415.50 399.86 V389.91 L416.95 388.48 H419.85 L421.30 389.91 V399.86 L419.85 401.28 Z M415.94 399.15 L420.87 390.62" fill="none" stroke="#444" stroke-width="1.2" stroke-linejoin="round" stroke-linecap="round" /><path d="M402.25 412.49 L400.80 411.07 V407.65 L402.25 406.23 H405.15 L406.60 407.65 V411.07 L405.15 412.49 Z M402.25 412.49 L400.80 413.91 V417.61 L402.25 419.03 H405.15 L406.60 417.61 V413.91 L405.15 412.49 M409.60 419.03 L408.15 417.61 V407.65 L409.60 406.23 H412.50 L413.95 407.65 V417.61 L412.50 419.03 Z M408.59 416.90 L413.52 408.36 M416.95 419.03 L415.50 417.61 V407.65 L416.95 406.23 H419.85 L421.30 407.65 V417.61 L419.85 419.03 Z M415.94 416.90 L420.87 408.36" fill="none" stroke="#444" stroke-width="1.2" stroke-linejoin="round" stroke-linecap="round" /><path d="M400.80 423.98 H406.60 V425.40 L402.83 436.78 M409.60 436.78 L408.15 435.35 V425.40 L409.60 423.98 H412.50 L413.95 425.40 V435.35 L412.50 436.78 Z M408.59 434.64 L413.52 426.11 M416.95 436.78 L415.50 435.35 V425.40 L416.95 423.98 H419.85 L421.30 425.40 V435.35 L419.85 436.78 Z M415.94 434.64 L420.87 426.11" fill="none" stroke="#444" stroke-width="1.2" stroke-linejoin="round" stroke-linecap="round" /><path d="M406.31 442.86 L405.15 441.72 H402.25 L400.80 443.15 V453.10 L402.25 454.52 H405.15 L406.60 453.10 V448.83 L405.15 447.41 H400.80 M409.60 454.52 L408.15 453.10 V443.15 L409.60 441.72 H412.50 L413.95 443.15 V453.10 L412.50 454.52 Z M408.59 452.39 L413.52 443.86 M416.95 454.52 L415.50 453.10 V443.15 L416.95 441.72 H419.85 L421.30 443.15 V453.10 L419.85 454.52 Z M415.94 452.39 L420.87 443.86" fill="none" stroke="#444" stroke-width="1.2" stroke-linejoin="round" stroke-linecap="round" /><path d="M406.45 459.47 H401.09 V464.87 H405.15 L406.60 466.30 V470.85 L405.15 472.27 H402.25 L400.80 470.85 M409.60 472.27 L408.15 470.85 V460.89 L409.60 459.47 H412.50 L413.95 460.89 V470.85 L412.50 472.27 Z M408.59 470.14 L413.52 461.60 M416.95 472.27 L415.50 470.85 V460.89 L416.95 459.47 H419.85 L421.30 460.89 V470.85 L419.85 472.27 Z M415.94 470.14 L420.87 461.60" fill="none" stroke="#444" stroke-width="1.2" stroke-linejoin="round" stroke-linecap="round" /><path d="M405.15 490.02 V477.22 L400.80 486.03 V486.46 H406.89 M409.60 490.02 L408.15 488.59 V478.64 L409.60 477.22 H412.50 L413.95 478.64 V488.59 L412.50 490.02 Z M408.59 487.88 L413.52 479.35 M416.95 490.02 L415.50 488.59 V478.64 L416.95 477.22 H419.85 L421.30 478.64 V488.59 L419.85 490.02 Z M415.94 487.88 L420.87 479.35" fill="none" stroke="#444" stroke-width="1.2" stroke-linejoin="round" stroke-linecap="round" /><path d="M400.80 496.38 L402.25 494.96 H405.15 L406.60 496.38 V499.80 L405.15 501.22 H403.12 M405.15 501.22 L406.60 502.64 V506.34 L405.15 507.76 H402.25 L400.80 506.34 M409.60 507.76 L408.15 506.34 V496.38 L409.60 494.96 H412.50 L413.95 496.38 V506.34 L412.50 507.76 Z M408.59 505.63 L413.52 497.09 M416.95 507.76 L415.50 506.34 V496.38 L416.95 494.96 H419.85 L421.30 496.38 V506.34 L419.85 507.76 Z M415.94 505.63 L420.87 497.09" fill="none" stroke="#444" stroke-width="1.2" stroke-linejoin="round" stroke-linecap="round" /><path d="M400.80 514.41 L402.25 512.71 H405.15 L406.60 514.13 V517.54 L400.80 523.80 V525.51 H406.60 M409.60 525.51 L408.15 524.09 V514.13 L409.60 512.71 H412.50 L413.95 514.13 V524.09 L412.50 525.51 Z M408.59 523.37 L413.52 514.84 M416.95 525.51 L415.50 524.09 V514.13 L416.95 512.71 H419.85 L421.30 514.13 V524.09 L419.85 525.51 Z M415.94 523.37 L420.87 514.84" fill="none" stroke="#444" stroke-width="1.2" stroke-linejoin="round" stroke-linecap="round" /><path d="M401.96 532.87 L403.99 530.45 V543.25 M409.60 543.25 L408.15 541.83 V531.88 L409.60 530.45 H412.50 L413.95 531.88 V541.83 L412.50 543.25 Z M408.59 541.12 L413.52 532.59 M416.95 543.25 L415.50 541.83 V531.88 L416.95 530.45 H419.85 L421.30 531.88 V541.83 L419.85 543.25 Z M415.94 541.12 L420.87 532.59" fill="none" stroke="#444" stroke-width="1.2" stroke-linejoin="round" stroke-linecap="round" /><path d="M402.25 561.00 L400.80 559.58 V549.62 L402.25 548.20 H405.15 L406.60 549.62 V559.58 L405.15 561.00 Z M401.24 558.87 L406.17 550.33" fill="none" stroke="#444" stroke-width="1.2" stroke-linejoin="round" stroke-linecap="round" /><path d="M184.5 151.5 L483 386.5" stroke="#CA1218" stroke-width="4.6"/><path d="M472.5 386.5 L486 389 L480.5 377.5 Z" fill="#CC1418"/><circle cx="188.3" cy="150.3" r="29.3" fill="none" stroke="#DD1A1E" stroke-width="3.8" stroke-dasharray="13.9 10.1" transform="rotate(277 188.3 150.3)"/><g clip-path="url(#zc)"><rect x="440" y="345" width="270" height="270" fill="#fff"/><rect x="440" y="383.8" width="270" height="16" fill="#FF6A04"/><rect x="440" y="383.8" width="270" height="1.3" fill="#D85010"/><rect x="440" y="399.2" width="270" height="15.3" fill="#FF3A0E"/><rect x="440" y="414.5" width="270" height="14" fill="#FF0E10"/><defs><linearGradient id="cg" x1="0" y1="0" x2="0" y2="1"><stop offset="0" stop-color="#F21020"/><stop offset="1" stop-color="#C8183A"/></linearGradient></defs><rect x="440" y="424" width="270" height="20" fill="url(#cg)"/><rect x="440" y="444" width="270" height="175" fill="#AE2E4A"/><path d="M473.5 384 V620 M499.5 384 V620 M526 384 V620 M552 384 V620 M588.5 384 V620 M614.4 384 V620 M640 384 V620 M666 384 V620 M440 479.2 H710 M440 514.2 H710 M480 543 H660 M520 578 H620" stroke="#D888A0" stroke-width="0.7" opacity="0.6" fill="none"/><rect x="440" y="442.8" width="270" height="2.6" fill="#0A0008"/><path d="M440 512 H451.3 A97.9 97.9 0 0 1 549.2 609.9 V620 H440 Z" fill="#fff"/><path d="M710 511.8 H687.1 A96.9 96.9 0 0 0 590.2 608.7 V620 H710 Z" fill="#fff"/><path d="M440 512 H451.3 A97.9 97.9 0 0 1 549.2 609.9 V620 M710 511.8 H687.1 A96.9 96.9 0 0 0 590.2 608.7 V620" fill="none" stroke="#200A60" stroke-width="2.4"/><path d="M503.80 377.00 H499.90 L498.60 375.67 V372.33 L499.90 371.00 H502.50 L503.80 372.33 V381.67 L502.50 383.00 H499.90 L498.86 381.93 M504.15 372.60 L505.45 371.00 H508.05 L509.35 372.33 V375.53 L504.15 381.40 V383.00 H509.35 M511.00 376.87 L509.70 375.53 V372.33 L511.00 371.00 H513.60 L514.90 372.33 V375.53 L513.60 376.87 Z M511.00 376.87 L509.70 378.20 V381.67 L511.00 383.00 H513.60 L514.90 381.67 V378.20 L513.60 376.87" fill="none" stroke="#555" stroke-width="1.05" stroke-linejoin="round" stroke-linecap="round" /><path d="M529.00 377.00 H525.10 L523.80 375.67 V372.33 L525.10 371.00 H527.70 L529.00 372.33 V381.67 L527.70 383.00 H525.10 L524.06 381.93 M529.35 372.60 L530.65 371.00 H533.25 L534.55 372.33 V375.53 L529.35 381.40 V383.00 H534.55 M536.20 376.87 L534.90 375.53 V372.33 L536.20 371.00 H538.80 L540.10 372.33 V375.53 L538.80 376.87 Z M536.20 376.87 L534.90 378.20 V381.67 L536.20 383.00 H538.80 L540.10 381.67 V378.20 L538.80 376.87" fill="none" stroke="#555" stroke-width="1.05" stroke-linejoin="round" stroke-linecap="round" /><path d="M556.20 377.00 H552.30 L551.00 375.67 V372.33 L552.30 371.00 H554.90 L556.20 372.33 V381.67 L554.90 383.00 H552.30 L551.26 381.93 M556.55 372.60 L557.85 371.00 H560.45 L561.75 372.33 V375.53 L556.55 381.40 V383.00 H561.75 M563.40 376.87 L562.10 375.53 V372.33 L563.40 371.00 H566.00 L567.30 372.33 V375.53 L566.00 376.87 Z M563.40 376.87 L562.10 378.20 V381.67 L563.40 383.00 H566.00 L567.30 381.67 V378.20 L566.00 376.87" fill="none" stroke="#555" stroke-width="1.05" stroke-linejoin="round" stroke-linecap="round" /><path d="M593.00 377.00 H589.10 L587.80 375.67 V372.33 L589.10 371.00 H591.70 L593.00 372.33 V381.67 L591.70 383.00 H589.10 L588.06 381.93 M593.35 372.60 L594.65 371.00 H597.25 L598.55 372.33 V375.53 L593.35 381.40 V383.00 H598.55 M600.20 376.87 L598.90 375.53 V372.33 L600.20 371.00 H602.80 L604.10 372.33 V375.53 L602.80 376.87 Z M600.20 376.87 L598.90 378.20 V381.67 L600.20 383.00 H602.80 L604.10 381.67 V378.20 L602.80 376.87" fill="none" stroke="#555" stroke-width="1.05" stroke-linejoin="round" stroke-linecap="round" /><path d="M618.20 377.00 H614.30 L613.00 375.67 V372.33 L614.30 371.00 H616.90 L618.20 372.33 V381.67 L616.90 383.00 H614.30 L613.26 381.93 M618.55 372.60 L619.85 371.00 H622.45 L623.75 372.33 V375.53 L618.55 381.40 V383.00 H623.75 M625.40 376.87 L624.10 375.53 V372.33 L625.40 371.00 H628.00 L629.30 372.33 V375.53 L628.00 376.87 Z M625.40 376.87 L624.10 378.20 V381.67 L625.40 383.00 H628.00 L629.30 381.67 V378.20 L628.00 376.87" fill="none" stroke="#555" stroke-width="1.05" stroke-linejoin="round" stroke-linecap="round" /><path d="M643.20 377.00 H639.30 L638.00 375.67 V372.33 L639.30 371.00 H641.90 L643.20 372.33 V381.67 L641.90 383.00 H639.30 L638.26 381.93 M643.55 372.60 L644.85 371.00 H647.45 L648.75 372.33 V375.53 L643.55 381.40 V383.00 H648.75 M650.40 376.87 L649.10 375.53 V372.33 L650.40 371.00 H653.00 L654.30 372.33 V375.53 L653.00 376.87 Z M650.40 376.87 L649.10 378.20 V381.67 L650.40 383.00 H653.00 L654.30 381.67 V378.20 L653.00 376.87" fill="none" stroke="#555" stroke-width="1.05" stroke-linejoin="round" stroke-linecap="round" /><path d="M477.94 402.87 L476.90 401.80 H474.30 L473.00 403.13 V412.47 L474.30 413.80 H476.90 L478.20 412.47 V408.47 L476.90 407.13 H473.00 M479.85 407.67 L478.55 406.33 V403.13 L479.85 401.80 H482.45 L483.75 403.13 V406.33 L482.45 407.67 Z M479.85 407.67 L478.55 409.00 V412.47 L479.85 413.80 H482.45 L483.75 412.47 V409.00 L482.45 407.67 M489.04 402.87 L488.00 401.80 H485.40 L484.10 403.13 V412.47 L485.40 413.80 H488.00 L489.30 412.47 V408.47 L488.00 407.13 H484.10" fill="none" stroke="#6a2018" stroke-width="1.05" stroke-linejoin="round" stroke-linecap="round" /><path d="M503.94 402.87 L502.90 401.80 H500.30 L499.00 403.13 V412.47 L500.30 413.80 H502.90 L504.20 412.47 V408.47 L502.90 407.13 H499.00 M505.85 407.67 L504.55 406.33 V403.13 L505.85 401.80 H508.45 L509.75 403.13 V406.33 L508.45 407.67 Z M505.85 407.67 L504.55 409.00 V412.47 L505.85 413.80 H508.45 L509.75 412.47 V409.00 L508.45 407.67 M515.04 402.87 L514.00 401.80 H511.40 L510.10 403.13 V412.47 L511.40 413.80 H514.00 L515.30 412.47 V408.47 L514.00 407.13 H510.10" fill="none" stroke="#6a2018" stroke-width="1.05" stroke-linejoin="round" stroke-linecap="round" /><path d="M529.94 402.87 L528.90 401.80 H526.30 L525.00 403.13 V412.47 L526.30 413.80 H528.90 L530.20 412.47 V408.47 L528.90 407.13 H525.00 M531.85 407.67 L530.55 406.33 V403.13 L531.85 401.80 H534.45 L535.75 403.13 V406.33 L534.45 407.67 Z M531.85 407.67 L530.55 409.00 V412.47 L531.85 413.80 H534.45 L535.75 412.47 V409.00 L534.45 407.67 M541.17 401.80 H536.36 V406.87 H540.00 L541.30 408.20 V412.47 L540.00 413.80 H537.40 L536.10 412.47" fill="none" stroke="#6a2018" stroke-width="1.05" stroke-linejoin="round" stroke-linecap="round" /><path d="M555.94 402.87 L554.90 401.80 H552.30 L551.00 403.13 V412.47 L552.30 413.80 H554.90 L556.20 412.47 V408.47 L554.90 407.13 H551.00 M557.85 407.67 L556.55 406.33 V403.13 L557.85 401.80 H560.45 L561.75 403.13 V406.33 L560.45 407.67 Z M557.85 407.67 L556.55 409.00 V412.47 L557.85 413.80 H560.45 L561.75 412.47 V409.00 L560.45 407.67 M567.17 401.80 H562.36 V406.87 H566.00 L567.30 408.20 V412.47 L566.00 413.80 H563.40 L562.10 412.47" fill="none" stroke="#6a2018" stroke-width="1.05" stroke-linejoin="round" stroke-linecap="round" /><path d="M592.94 402.87 L591.90 401.80 H589.30 L588.00 403.13 V412.47 L589.30 413.80 H591.90 L593.20 412.47 V408.47 L591.90 407.13 H588.00 M594.85 407.67 L593.55 406.33 V403.13 L594.85 401.80 H597.45 L598.75 403.13 V406.33 L597.45 407.67 Z M594.85 407.67 L593.55 409.00 V412.47 L594.85 413.80 H597.45 L598.75 412.47 V409.00 L597.45 407.67 M604.17 401.80 H599.36 V406.87 H603.00 L604.30 408.20 V412.47 L603.00 413.80 H600.40 L599.10 412.47" fill="none" stroke="#6a2018" stroke-width="1.05" stroke-linejoin="round" stroke-linecap="round" /><path d="M617.94 402.87 L616.90 401.80 H614.30 L613.00 403.13 V412.47 L614.30 413.80 H616.90 L618.20 412.47 V408.47 L616.90 407.13 H613.00 M619.85 407.67 L618.55 406.33 V403.13 L619.85 401.80 H622.45 L623.75 403.13 V406.33 L622.45 407.67 Z M619.85 407.67 L618.55 409.00 V412.47 L619.85 413.80 H622.45 L623.75 412.47 V409.00 L622.45 407.67 M629.17 401.80 H624.36 V406.87 H628.00 L629.30 408.20 V412.47 L628.00 413.80 H625.40 L624.10 412.47" fill="none" stroke="#6a2018" stroke-width="1.05" stroke-linejoin="round" stroke-linecap="round" /><path d="M643.94 402.87 L642.90 401.80 H640.30 L639.00 403.13 V412.47 L640.30 413.80 H642.90 L644.20 412.47 V408.47 L642.90 407.13 H639.00 M645.85 407.67 L644.55 406.33 V403.13 L645.85 401.80 H648.45 L649.75 403.13 V406.33 L648.45 407.67 Z M645.85 407.67 L644.55 409.00 V412.47 L645.85 413.80 H648.45 L649.75 412.47 V409.00 L648.45 407.67 M655.04 402.87 L654.00 401.80 H651.40 L650.10 403.13 V412.47 L651.40 413.80 H654.00 L655.30 412.47 V408.47 L654.00 407.13 H650.10" fill="none" stroke="#6a2018" stroke-width="1.05" stroke-linejoin="round" stroke-linecap="round" /><path d="M668.94 402.87 L667.90 401.80 H665.30 L664.00 403.13 V412.47 L665.30 413.80 H667.90 L669.20 412.47 V408.47 L667.90 407.13 H664.00 M670.85 407.67 L669.55 406.33 V403.13 L670.85 401.80 H673.45 L674.75 403.13 V406.33 L673.45 407.67 Z M670.85 407.67 L669.55 409.00 V412.47 L670.85 413.80 H673.45 L674.75 412.47 V409.00 L673.45 407.67 M680.04 402.87 L679.00 401.80 H676.40 L675.10 403.13 V412.47 L676.40 413.80 H679.00 L680.30 412.47 V408.47 L679.00 407.13 H675.10" fill="none" stroke="#6a2018" stroke-width="1.05" stroke-linejoin="round" stroke-linecap="round" /><path d="M450.90 442.00 V430.00 L447.00 438.27 V438.67 H452.46 M456.45 442.00 V430.00 L452.55 438.27 V438.67 H458.01 M463.30 436.00 H459.40 L458.10 434.67 V431.33 L459.40 430.00 H462.00 L463.30 431.33 V440.67 L462.00 442.00 H459.40 L458.36 440.93" fill="none" stroke="#5a1a28" stroke-width="1.05" stroke-linejoin="round" stroke-linecap="round" /><path d="M476.90 442.00 V430.00 L473.00 438.27 V438.67 H478.46 M482.45 442.00 V430.00 L478.55 438.27 V438.67 H484.01 M485.40 435.87 L484.10 434.53 V431.33 L485.40 430.00 H488.00 L489.30 431.33 V434.53 L488.00 435.87 Z M485.40 435.87 L484.10 437.20 V440.67 L485.40 442.00 H488.00 L489.30 440.67 V437.20 L488.00 435.87" fill="none" stroke="#5a1a28" stroke-width="1.05" stroke-linejoin="round" stroke-linecap="round" /><path d="M502.90 442.00 V430.00 L499.00 438.27 V438.67 H504.46 M508.45 442.00 V430.00 L504.55 438.27 V438.67 H510.01 M511.40 435.87 L510.10 434.53 V431.33 L511.40 430.00 H514.00 L515.30 431.33 V434.53 L514.00 435.87 Z M511.40 435.87 L510.10 437.20 V440.67 L511.40 442.00 H514.00 L515.30 440.67 V437.20 L514.00 435.87" fill="none" stroke="#5a1a28" stroke-width="1.05" stroke-linejoin="round" stroke-linecap="round" /><path d="M528.90 442.00 V430.00 L525.00 438.27 V438.67 H530.46 M534.45 442.00 V430.00 L530.55 438.27 V438.67 H536.01 M536.10 430.00 H541.30 V431.33 L537.92 442.00" fill="none" stroke="#5a1a28" stroke-width="1.05" stroke-linejoin="round" stroke-linecap="round" /><path d="M554.90 442.00 V430.00 L551.00 438.27 V438.67 H556.46 M560.45 442.00 V430.00 L556.55 438.27 V438.67 H562.01 M562.10 430.00 H567.30 V431.33 L563.92 442.00" fill="none" stroke="#5a1a28" stroke-width="1.05" stroke-linejoin="round" stroke-linecap="round" /><path d="M591.90 442.00 V430.00 L588.00 438.27 V438.67 H593.46 M597.45 442.00 V430.00 L593.55 438.27 V438.67 H599.01 M599.10 430.00 H604.30 V431.33 L600.92 442.00" fill="none" stroke="#5a1a28" stroke-width="1.05" stroke-linejoin="round" stroke-linecap="round" /><path d="M616.90 442.00 V430.00 L613.00 438.27 V438.67 H618.46 M622.45 442.00 V430.00 L618.55 438.27 V438.67 H624.01 M624.10 430.00 H629.30 V431.33 L625.92 442.00" fill="none" stroke="#5a1a28" stroke-width="1.05" stroke-linejoin="round" stroke-linecap="round" /><path d="M642.90 442.00 V430.00 L639.00 438.27 V438.67 H644.46 M648.45 442.00 V430.00 L644.55 438.27 V438.67 H650.01 M651.40 435.87 L650.10 434.53 V431.33 L651.40 430.00 H654.00 L655.30 431.33 V434.53 L654.00 435.87 Z M651.40 435.87 L650.10 437.20 V440.67 L651.40 442.00 H654.00 L655.30 440.67 V437.20 L654.00 435.87" fill="none" stroke="#5a1a28" stroke-width="1.05" stroke-linejoin="round" stroke-linecap="round" /><path d="M667.90 442.00 V430.00 L664.00 438.27 V438.67 H669.46 M673.45 442.00 V430.00 L669.55 438.27 V438.67 H675.01 M676.40 435.87 L675.10 434.53 V431.33 L676.40 430.00 H679.00 L680.30 431.33 V434.53 L679.00 435.87 Z M676.40 435.87 L675.10 437.20 V440.67 L676.40 442.00 H679.00 L680.30 440.67 V437.20 L679.00 435.87" fill="none" stroke="#5a1a28" stroke-width="1.05" stroke-linejoin="round" stroke-linecap="round" /><path d="M449.90 477.50 V465.50 L446.00 473.77 V474.17 H451.46 M455.45 477.50 V465.50 L451.55 473.77 V474.17 H457.01 M458.40 471.37 L457.10 470.03 V466.83 L458.40 465.50 H461.00 L462.30 466.83 V470.03 L461.00 471.37 Z M458.40 471.37 L457.10 472.70 V476.17 L458.40 477.50 H461.00 L462.30 476.17 V472.70 L461.00 471.37" fill="none" stroke="#4a2232" stroke-width="1.05" stroke-linejoin="round" stroke-linecap="round" /><path d="M476.90 477.50 V465.50 L473.00 473.77 V474.17 H478.46 M482.45 477.50 V465.50 L478.55 473.77 V474.17 H484.01 M485.40 471.37 L484.10 470.03 V466.83 L485.40 465.50 H488.00 L489.30 466.83 V470.03 L488.00 471.37 Z M485.40 471.37 L484.10 472.70 V476.17 L485.40 477.50 H488.00 L489.30 476.17 V472.70 L488.00 471.37" fill="none" stroke="#4a2232" stroke-width="1.05" stroke-linejoin="round" stroke-linecap="round" /><path d="M502.90 477.50 V465.50 L499.00 473.77 V474.17 H504.46 M508.45 477.50 V465.50 L504.55 473.77 V474.17 H510.01 M510.10 465.50 H515.30 V466.83 L511.92 477.50" fill="none" stroke="#4a2232" stroke-width="1.05" stroke-linejoin="round" stroke-linecap="round" /><path d="M529.60 477.50 V465.50 L525.70 473.77 V474.17 H531.16 M535.15 477.50 V465.50 L531.25 473.77 V474.17 H536.71 M536.80 465.50 H542.00 V466.83 L538.62 477.50" fill="none" stroke="#4a2232" stroke-width="1.05" stroke-linejoin="round" stroke-linecap="round" /><path d="M554.90 477.50 V465.50 L551.00 473.77 V474.17 H556.46 M560.45 477.50 V465.50 L556.55 473.77 V474.17 H562.01 M567.04 466.57 L566.00 465.50 H563.40 L562.10 466.83 V476.17 L563.40 477.50 H566.00 L567.30 476.17 V472.17 L566.00 470.83 H562.10" fill="none" stroke="#4a2232" stroke-width="1.05" stroke-linejoin="round" stroke-linecap="round" /><path d="M591.90 477.50 V465.50 L588.00 473.77 V474.17 H593.46 M597.45 477.50 V465.50 L593.55 473.77 V474.17 H599.01 M604.04 466.57 L603.00 465.50 H600.40 L599.10 466.83 V476.17 L600.40 477.50 H603.00 L604.30 476.17 V472.17 L603.00 470.83 H599.10" fill="none" stroke="#4a2232" stroke-width="1.05" stroke-linejoin="round" stroke-linecap="round" /><path d="M616.90 477.50 V465.50 L613.00 473.77 V474.17 H618.46 M622.45 477.50 V465.50 L618.55 473.77 V474.17 H624.01 M624.10 465.50 H629.30 V466.83 L625.92 477.50" fill="none" stroke="#4a2232" stroke-width="1.05" stroke-linejoin="round" stroke-linecap="round" /><path d="M642.90 477.50 V465.50 L639.00 473.77 V474.17 H644.46 M648.45 477.50 V465.50 L644.55 473.77 V474.17 H650.01 M650.10 465.50 H655.30 V466.83 L651.92 477.50" fill="none" stroke="#4a2232" stroke-width="1.05" stroke-linejoin="round" stroke-linecap="round" /><path d="M667.90 477.50 V465.50 L664.00 473.77 V474.17 H669.46 M673.45 477.50 V465.50 L669.55 473.77 V474.17 H675.01 M676.40 471.37 L675.10 470.03 V466.83 L676.40 465.50 H679.00 L680.30 466.83 V470.03 L679.00 471.37 Z M676.40 471.37 L675.10 472.70 V476.17 L676.40 477.50 H679.00 L680.30 476.17 V472.70 L679.00 471.37" fill="none" stroke="#4a2232" stroke-width="1.05" stroke-linejoin="round" stroke-linecap="round" /><path d="M693.90 477.50 V465.50 L690.00 473.77 V474.17 H695.46 M699.45 477.50 V465.50 L695.55 473.77 V474.17 H701.01 M702.40 471.37 L701.10 470.03 V466.83 L702.40 465.50 H705.00 L706.30 466.83 V470.03 L705.00 471.37 Z M702.40 471.37 L701.10 472.70 V476.17 L702.40 477.50 H705.00 L706.30 476.17 V472.70 L705.00 471.37" fill="none" stroke="#4a2232" stroke-width="1.05" stroke-linejoin="round" stroke-linecap="round" /><path d="M464.50 511.00 V499.00 L460.60 507.27 V507.67 H466.06 M470.05 511.00 V499.00 L466.15 507.27 V507.67 H471.61 M473.00 504.87 L471.70 503.53 V500.33 L473.00 499.00 H475.60 L476.90 500.33 V503.53 L475.60 504.87 Z M473.00 504.87 L471.70 506.20 V509.67 L473.00 511.00 H475.60 L476.90 509.67 V506.20 L475.60 504.87" fill="none" stroke="#4a2232" stroke-width="1.05" stroke-linejoin="round" stroke-linecap="round" /><path d="M478.90 511.00 V499.00 L475.00 507.27 V507.67 H480.46 M484.45 511.00 V499.00 L480.55 507.27 V507.67 H486.01 M487.40 504.87 L486.10 503.53 V500.33 L487.40 499.00 H490.00 L491.30 500.33 V503.53 L490.00 504.87 Z M487.40 504.87 L486.10 506.20 V509.67 L487.40 511.00 H490.00 L491.30 509.67 V506.20 L490.00 504.87" fill="none" stroke="#4a2232" stroke-width="1.05" stroke-linejoin="round" stroke-linecap="round" /><path d="M499.70 520.50 V508.50 L495.80 516.77 V517.17 H501.26 M505.25 520.50 V508.50 L501.35 516.77 V517.17 H506.81 M506.90 508.50 H512.10 V509.83 L508.72 520.50" fill="none" stroke="#4a2232" stroke-width="1.05" stroke-linejoin="round" stroke-linecap="round" /><path d="M528.80 511.00 V499.00 L524.90 507.27 V507.67 H530.36 M534.35 511.00 V499.00 L530.45 507.27 V507.67 H535.91 M540.94 500.07 L539.90 499.00 H537.30 L536.00 500.33 V509.67 L537.30 511.00 H539.90 L541.20 509.67 V505.67 L539.90 504.33 H536.00" fill="none" stroke="#4a2232" stroke-width="1.05" stroke-linejoin="round" stroke-linecap="round" /><path d="M554.70 511.00 V499.00 L550.80 507.27 V507.67 H556.26 M560.25 511.00 V499.00 L556.35 507.27 V507.67 H561.81 M566.84 500.07 L565.80 499.00 H563.20 L561.90 500.33 V509.67 L563.20 511.00 H565.80 L567.10 509.67 V505.67 L565.80 504.33 H561.90" fill="none" stroke="#4a2232" stroke-width="1.05" stroke-linejoin="round" stroke-linecap="round" /><path d="M592.40 511.00 V499.00 L588.50 507.27 V507.67 H593.96 M597.95 511.00 V499.00 L594.05 507.27 V507.67 H599.51 M604.54 500.07 L603.50 499.00 H600.90 L599.60 500.33 V509.67 L600.90 511.00 H603.50 L604.80 509.67 V505.67 L603.50 504.33 H599.60" fill="none" stroke="#4a2232" stroke-width="1.05" stroke-linejoin="round" stroke-linecap="round" /><path d="M618.30 511.00 V499.00 L614.40 507.27 V507.67 H619.86 M623.85 511.00 V499.00 L619.95 507.27 V507.67 H625.41 M630.44 500.07 L629.40 499.00 H626.80 L625.50 500.33 V509.67 L626.80 511.00 H629.40 L630.70 509.67 V505.67 L629.40 504.33 H625.50" fill="none" stroke="#4a2232" stroke-width="1.05" stroke-linejoin="round" stroke-linecap="round" /><path d="M648.40 519.40 V507.40 L644.50 515.67 V516.07 H649.96 M653.95 519.40 V507.40 L650.05 515.67 V516.07 H655.51 M655.60 507.40 H660.80 V508.73 L657.42 519.40" fill="none" stroke="#4a2232" stroke-width="1.05" stroke-linejoin="round" stroke-linecap="round" /><path d="M670.20 511.00 V499.00 L666.30 507.27 V507.67 H671.76 M675.75 511.00 V499.00 L671.85 507.27 V507.67 H677.31 M678.70 504.87 L677.40 503.53 V500.33 L678.70 499.00 H681.30 L682.60 500.33 V503.53 L681.30 504.87 Z M678.70 504.87 L677.40 506.20 V509.67 L678.70 511.00 H681.30 L682.60 509.67 V506.20 L681.30 504.87" fill="none" stroke="#4a2232" stroke-width="1.05" stroke-linejoin="round" stroke-linecap="round" /><path d="M684.90 511.00 V499.00 L681.00 507.27 V507.67 H686.46 M690.45 511.00 V499.00 L686.55 507.27 V507.67 H692.01 M693.40 504.87 L692.10 503.53 V500.33 L693.40 499.00 H696.00 L697.30 500.33 V503.53 L696.00 504.87 Z M693.40 504.87 L692.10 506.20 V509.67 L693.40 511.00 H696.00 L697.30 509.67 V506.20 L696.00 504.87" fill="none" stroke="#4a2232" stroke-width="1.05" stroke-linejoin="round" stroke-linecap="round" /><path d="M527.70 543.30 V531.30 L523.80 539.57 V539.97 H529.26 M533.25 543.30 V531.30 L529.35 539.57 V539.97 H534.81 M539.84 532.37 L538.80 531.30 H536.20 L534.90 532.63 V541.97 L536.20 543.30 H538.80 L540.10 541.97 V537.97 L538.80 536.63 H534.90" fill="none" stroke="#4a2232" stroke-width="1.05" stroke-linejoin="round" stroke-linecap="round" /><path d="M554.70 543.30 V531.30 L550.80 539.57 V539.97 H556.26 M560.25 543.30 V531.30 L556.35 539.57 V539.97 H561.81 M566.84 532.37 L565.80 531.30 H563.20 L561.90 532.63 V541.97 L563.20 543.30 H565.80 L567.10 541.97 V537.97 L565.80 536.63 H561.90" fill="none" stroke="#4a2232" stroke-width="1.05" stroke-linejoin="round" stroke-linecap="round" /><path d="M592.40 543.30 V531.30 L588.50 539.57 V539.97 H593.96 M597.95 543.30 V531.30 L594.05 539.57 V539.97 H599.51 M604.54 532.37 L603.50 531.30 H600.90 L599.60 532.63 V541.97 L600.90 543.30 H603.50 L604.80 541.97 V537.97 L603.50 536.63 H599.60" fill="none" stroke="#4a2232" stroke-width="1.05" stroke-linejoin="round" stroke-linecap="round" /><path d="M620.40 545.00 V533.00 L616.50 541.27 V541.67 H621.96 M625.95 545.00 V533.00 L622.05 541.27 V541.67 H627.51 M632.54 534.07 L631.50 533.00 H628.90 L627.60 534.33 V543.67 L628.90 545.00 H631.50 L632.80 543.67 V539.67 L631.50 538.33 H627.60" fill="none" stroke="#707070" stroke-width="1.05" stroke-linejoin="round" stroke-linecap="round" /><path d="M547.40 577.50 V565.50 L543.50 573.77 V574.17 H548.96 M552.95 577.50 V565.50 L549.05 573.77 V574.17 H554.51 M559.54 566.57 L558.50 565.50 H555.90 L554.60 566.83 V576.17 L555.90 577.50 H558.50 L559.80 576.17 V572.17 L558.50 570.83 H554.60" fill="none" stroke="#4a2232" stroke-width="1.05" stroke-linejoin="round" stroke-linecap="round" /><path d="M601.70 577.50 V565.50 L597.80 573.77 V574.17 H603.26 M607.25 577.50 V565.50 L603.35 573.77 V574.17 H608.81 M613.84 566.57 L612.80 565.50 H610.20 L608.90 566.83 V576.17 L610.20 577.50 H612.80 L614.10 576.17 V572.17 L612.80 570.83 H608.90" fill="none" stroke="#777" stroke-width="1.05" stroke-linejoin="round" stroke-linecap="round" /><path d="M553.70 601.40 V589.40 L549.80 597.67 V598.07 H555.26 M559.25 601.40 V589.40 L555.35 597.67 V598.07 H560.81 M565.84 590.47 L564.80 589.40 H562.20 L560.90 590.73 V600.07 L562.20 601.40 H564.80 L566.10 600.07 V596.07 L564.80 594.73 H560.90" fill="none" stroke="#4a2232" stroke-width="1.05" stroke-linejoin="round" stroke-linecap="round" /><path d="M595.50 601.40 V589.40 L591.60 597.67 V598.07 H597.06 M601.05 601.40 V589.40 L597.15 597.67 V598.07 H602.61 M607.64 590.47 L606.60 589.40 H604.00 L602.70 590.73 V600.07 L604.00 601.40 H606.60 L607.90 600.07 V596.07 L606.60 594.73 H602.70" fill="none" stroke="#777" stroke-width="1.05" stroke-linejoin="round" stroke-linecap="round" /></g><circle cx="575.3" cy="479.5" r="126.6" fill="none" stroke="#D41414" stroke-width="4.6"/></svg>
</body></html>
